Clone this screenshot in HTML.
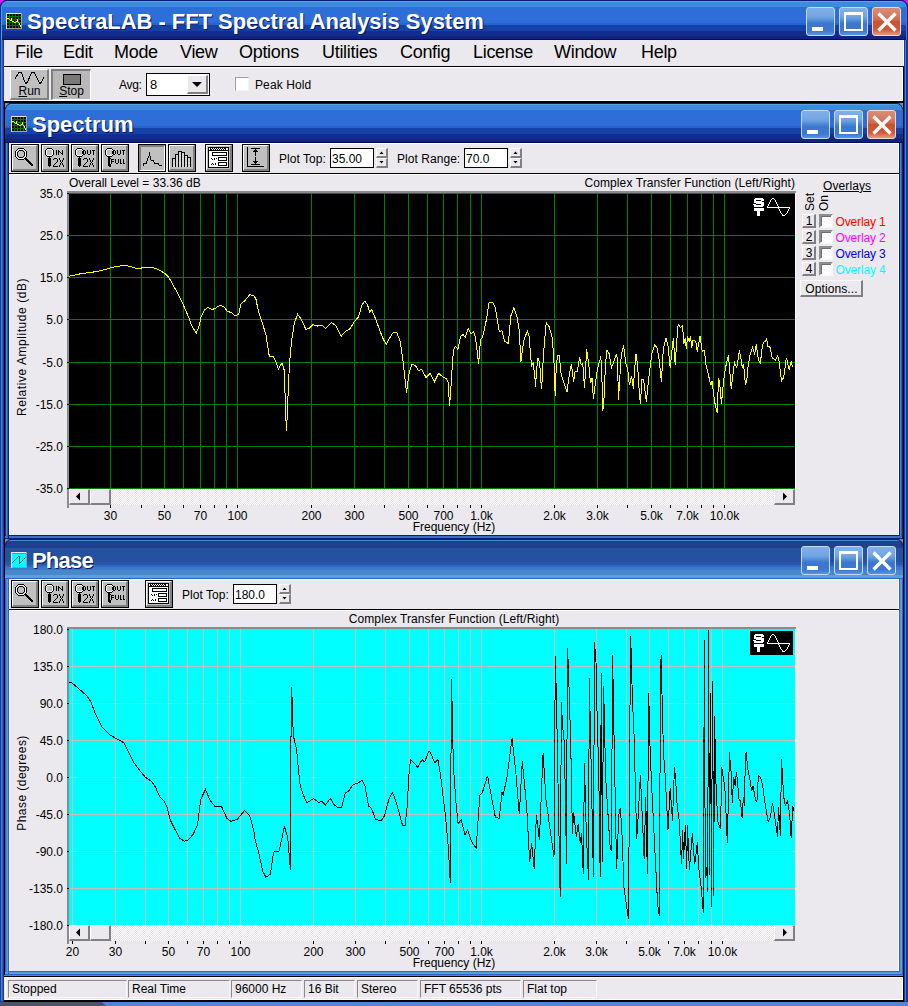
<!DOCTYPE html><html><head><meta charset="utf-8"><style>html,body{margin:0;padding:0;}body{width:908px;height:1006px;overflow:hidden;position:relative;background:#EBE9ED;font-family:"Liberation Sans", sans-serif;}</style></head><body>
<div style="position:absolute;left:0px;top:0px;width:908px;height:1006px;background:#1A3A9A"></div>
<div style="position:absolute;left:1px;top:40px;width:1px;height:961px;background:#4A7ED0"></div>
<div style="position:absolute;left:2px;top:40px;width:1px;height:961px;background:#2F5CC0"></div>
<div style="position:absolute;left:905px;top:40px;width:1px;height:961px;background:#4A7ED0"></div>
<div style="position:absolute;left:904px;top:40px;width:1px;height:961px;background:#1A3A9A"></div>
<div style="position:absolute;left:4px;top:40px;width:900px;height:961px;background:#000"></div>
<div style="position:absolute;left:0px;top:0px;width:908px;height:1px;background:#0A1A78"></div>
<div style="position:absolute;left:0px;top:1px;width:908px;height:1px;background:#5CA2EA"></div>
<div style="position:absolute;left:0px;top:2px;width:908px;height:5px;background:#3D8BDC"></div>
<div style="position:absolute;left:0px;top:7px;width:908px;height:16px;background:#2E6ED8"></div>
<div style="position:absolute;left:0px;top:23px;width:908px;height:2px;background:#2962CC"></div>
<div style="position:absolute;left:0px;top:25px;width:908px;height:6px;background:#1542A8"></div>
<div style="position:absolute;left:0px;top:31px;width:908px;height:5px;background:#132D8E"></div>
<div style="position:absolute;left:0px;top:36px;width:908px;height:3px;background:#0F2480"></div>
<div style="position:absolute;left:0px;top:39px;width:908px;height:1px;background:#020C58"></div>
<div style="position:absolute;left:0px;top:5px;width:1px;height:35px;background:#0A2A8A"></div>
<div style="position:absolute;left:1px;top:6px;width:1px;height:34px;background:#5A9AE0"></div>
<div style="position:absolute;left:907px;top:5px;width:1px;height:35px;background:#0A2A8A"></div>
<div style="position:absolute;left:906px;top:6px;width:1px;height:34px;background:#3A78D8"></div>
<svg style="position:absolute;left:0;top:0" width="9" height="9"><path d="M0 0 H6.5 A6.5 6.5 0 0 0 0 6.5 Z" fill="#FF00FF"/><path d="M0.5 7 A6.5 6.5 0 0 1 7 0.5" fill="none" stroke="#0A1A78" stroke-width="1.2"/></svg>
<svg style="position:absolute;left:899px;top:0" width="9" height="9"><path d="M9 0 H2.5 A6.5 6.5 0 0 1 9 6.5 Z" fill="#FF00FF"/><path d="M2 0.5 A6.5 6.5 0 0 1 8.5 7" fill="none" stroke="#0A1A78" stroke-width="1.2"/></svg>
<div style="position:absolute;left:27px;top:11.38px;height:22px;line-height:22px;font-size:22px;font-weight:700;color:#fff;letter-spacing:-0.05px;white-space:nowrap;text-shadow:1px 1px 0 #0A1860;">SpectraLAB - FFT Spectral Analysis System</div>
<div style="position:absolute;left:806px;top:7px;width:27px;height:27px;border:1px solid #C4DAF6;border-radius:3px;background:linear-gradient(#80B0E8 0%,#74A6E4 30%,#5E96DC 42%,#4A86D2 50%,#3E76CE 58%,#3E78D0 85%,#5C94E0 100%);"></div>
<div style="position:absolute;left:812px;top:27px;width:11px;height:4px;background:#fff"></div>
<div style="position:absolute;left:839px;top:7px;width:27px;height:27px;border:1px solid #C4DAF6;border-radius:3px;background:linear-gradient(#80B0E8 0%,#74A6E4 30%,#5E96DC 42%,#4A86D2 50%,#3E76CE 58%,#3E78D0 85%,#5C94E0 100%);"></div>
<div style="position:absolute;left:844px;top:12px;width:15px;height:14px;border-style:solid;border-color:#fff;border-width:3px 2px 2px 2px;"></div>
<div style="position:absolute;left:872px;top:7px;width:27px;height:27px;border:1px solid #F4D8CC;border-radius:3px;background:linear-gradient(#DC8C74 0%,#D47A62 30%,#CF6A4E 45%,#C9532F 50%,#CE5A38 80%,#E59A80 100%);"></div>
<svg style="position:absolute;left:872px;top:7px" width="30" height="30"><path d="M6.5 6.5 L23.5 23.5 M23.5 6.5 L6.5 23.5" stroke="#fff" stroke-width="3.3" stroke-linecap="butt"/></svg>
<div style="position:absolute;left:4px;top:40px;width:900px;height:26px;background:#EBE9ED"></div>
<div style="position:absolute;left:903px;top:40px;width:1px;height:26px;background:#fff"></div>
<div style="position:absolute;left:4px;top:66px;width:900px;height:1px;background:#000"></div>
<div style="position:absolute;left:15px;top:42.76px;height:18px;line-height:18px;font-size:18px;font-weight:400;color:#000;letter-spacing:-0.3px;white-space:nowrap;">File</div>
<div style="position:absolute;left:63px;top:42.76px;height:18px;line-height:18px;font-size:18px;font-weight:400;color:#000;letter-spacing:-0.3px;white-space:nowrap;">Edit</div>
<div style="position:absolute;left:114px;top:42.76px;height:18px;line-height:18px;font-size:18px;font-weight:400;color:#000;letter-spacing:-0.3px;white-space:nowrap;">Mode</div>
<div style="position:absolute;left:180px;top:42.76px;height:18px;line-height:18px;font-size:18px;font-weight:400;color:#000;letter-spacing:-0.3px;white-space:nowrap;">View</div>
<div style="position:absolute;left:239px;top:42.76px;height:18px;line-height:18px;font-size:18px;font-weight:400;color:#000;letter-spacing:-0.3px;white-space:nowrap;">Options</div>
<div style="position:absolute;left:322px;top:42.76px;height:18px;line-height:18px;font-size:18px;font-weight:400;color:#000;letter-spacing:-0.3px;white-space:nowrap;">Utilities</div>
<div style="position:absolute;left:400px;top:42.76px;height:18px;line-height:18px;font-size:18px;font-weight:400;color:#000;letter-spacing:-0.3px;white-space:nowrap;">Config</div>
<div style="position:absolute;left:473px;top:42.76px;height:18px;line-height:18px;font-size:18px;font-weight:400;color:#000;letter-spacing:-0.3px;white-space:nowrap;">License</div>
<div style="position:absolute;left:554px;top:42.76px;height:18px;line-height:18px;font-size:18px;font-weight:400;color:#000;letter-spacing:-0.3px;white-space:nowrap;">Window</div>
<div style="position:absolute;left:641px;top:42.76px;height:18px;line-height:18px;font-size:18px;font-weight:400;color:#000;letter-spacing:-0.3px;white-space:nowrap;">Help</div>
<div style="position:absolute;left:4px;top:67px;width:900px;height:34px;background:#EBE9ED"></div>
<div style="position:absolute;left:5px;top:67px;width:898px;height:1px;background:#fff"></div>
<div style="position:absolute;left:5px;top:100px;width:898px;height:1px;background:#fff"></div>
<div style="position:absolute;left:902px;top:67px;width:1px;height:34px;background:#fff"></div>
<div style="position:absolute;left:903px;top:66px;width:1px;height:37px;background:#000"></div>
<div style="position:absolute;left:4px;top:101px;width:900px;height:2px;background:#000"></div>
<div style="position:absolute;left:10px;top:69px;width:36px;height:28px;background:#C0C0C0;border-style:solid;border-width:1px 2px 2px 1px;border-color:#fff #808080 #808080 #fff"></div>
<svg style="position:absolute;left:10px;top:69px" width="39" height="31"><polyline points="5.2,9.5 8.5,4.0 10.0,3.0 11.5,4.0 14.5,12.0 16.0,14.5 17.5,13.0 21.5,4.0 23.0,3.0 24.5,4.0 28.5,12.0 30.0,14.5 31.5,13.0 33.6,8.5" fill="none" stroke="#000" stroke-width="1" shape-rendering="crispEdges"/></svg>
<div style="position:absolute;left:-170.5px;width:400px;top:84.84px;height:12px;line-height:12px;font-size:12px;font-weight:400;color:#000;letter-spacing:0px;white-space:nowrap;text-align:center;"><u>R</u>un</div>
<div style="position:absolute;left:51px;top:69px;width:37px;height:28px;background:#B8B8B8;border-style:solid;border-width:2px 1px 1px 2px;border-color:#808080 #fff #fff #808080"></div>
<div style="position:absolute;left:63px;top:74px;width:16px;height:9px;background:#7A7A7A;border:1px solid #000"></div>
<div style="position:absolute;left:-128.5px;width:400px;top:85.34px;height:12px;line-height:12px;font-size:12px;font-weight:400;color:#000;letter-spacing:0px;white-space:nowrap;text-align:center;"><u>S</u>top</div>
<div style="position:absolute;left:119px;top:78.84px;height:12px;line-height:12px;font-size:12px;font-weight:400;color:#000;letter-spacing:-0.3px;white-space:nowrap;">Avg:</div>
<div style="position:absolute;left:146px;top:73px;width:62px;height:21px;background:#fff;border:1px solid #000"></div>
<div style="position:absolute;left:187px;top:75px;width:18px;height:16px;background:#EBE9ED;border-style:solid;border-width:1px 2px 2px 1px;border-color:#fff #808080 #808080 #fff"></div>
<svg style="position:absolute;left:187px;top:75px" width="21" height="19"><path d="M5 7 H15 L10 12 Z" fill="#000"/></svg>
<div style="position:absolute;left:150px;top:78.00px;height:13px;line-height:13px;font-size:13px;font-weight:400;color:#000;letter-spacing:0px;white-space:nowrap;">8</div>
<div style="position:absolute;left:235px;top:77px;width:12px;height:12px;background:#fff;border-style:solid;border-width:1px;border-color:#A0A0A0 #F4F4F4 #F4F4F4 #A0A0A0"></div>
<div style="position:absolute;left:255px;top:78.84px;height:12px;line-height:12px;font-size:12px;font-weight:400;color:#000;letter-spacing:0.1px;white-space:nowrap;">Peak Hold</div>
<svg style="position:absolute;left:6px;top:13px" width="16" height="16" shape-rendering="crispEdges"><rect x="0" y="0" width="15" height="1" fill="#E4E2E0"/><rect x="15" y="0" width="1" height="1" fill="#A0A0A0"/><rect x="0" y="1" width="1" height="1" fill="#E4E2E0"/><rect x="1" y="1" width="2" height="1" fill="#000"/><rect x="3" y="1" width="1" height="1" fill="#007400"/><rect x="4" y="1" width="2" height="1" fill="#000"/><rect x="6" y="1" width="1" height="1" fill="#007400"/><rect x="7" y="1" width="2" height="1" fill="#000"/><rect x="9" y="1" width="1" height="1" fill="#007400"/><rect x="10" y="1" width="2" height="1" fill="#000"/><rect x="12" y="1" width="1" height="1" fill="#007400"/><rect x="13" y="1" width="2" height="1" fill="#000"/><rect x="15" y="1" width="1" height="1" fill="#A0A0A0"/><rect x="0" y="2" width="1" height="1" fill="#E4E2E0"/><rect x="1" y="2" width="2" height="1" fill="#000"/><rect x="3" y="2" width="1" height="1" fill="#007400"/><rect x="4" y="2" width="2" height="1" fill="#000"/><rect x="6" y="2" width="1" height="1" fill="#007400"/><rect x="7" y="2" width="2" height="1" fill="#000"/><rect x="9" y="2" width="1" height="1" fill="#007400"/><rect x="10" y="2" width="2" height="1" fill="#000"/><rect x="12" y="2" width="1" height="1" fill="#007400"/><rect x="13" y="2" width="2" height="1" fill="#000"/><rect x="15" y="2" width="1" height="1" fill="#A0A0A0"/><rect x="0" y="3" width="1" height="1" fill="#E4E2E0"/><rect x="1" y="3" width="14" height="1" fill="#007400"/><rect x="15" y="3" width="1" height="1" fill="#A0A0A0"/><rect x="0" y="4" width="1" height="1" fill="#E4E2E0"/><rect x="1" y="4" width="2" height="1" fill="#000"/><rect x="3" y="4" width="1" height="1" fill="#007400"/><rect x="4" y="4" width="2" height="1" fill="#000"/><rect x="6" y="4" width="1" height="1" fill="#007400"/><rect x="7" y="4" width="2" height="1" fill="#000"/><rect x="9" y="4" width="1" height="1" fill="#007400"/><rect x="10" y="4" width="2" height="1" fill="#000"/><rect x="12" y="4" width="1" height="1" fill="#007400"/><rect x="13" y="4" width="2" height="1" fill="#000"/><rect x="15" y="4" width="1" height="1" fill="#A0A0A0"/><rect x="0" y="5" width="1" height="1" fill="#E4E2E0"/><rect x="1" y="5" width="2" height="1" fill="#FFFF00"/><rect x="3" y="5" width="1" height="1" fill="#007400"/><rect x="4" y="5" width="1" height="1" fill="#000"/><rect x="5" y="5" width="1" height="1" fill="#FFFF00"/><rect x="6" y="5" width="1" height="1" fill="#007400"/><rect x="7" y="5" width="2" height="1" fill="#000"/><rect x="9" y="5" width="1" height="1" fill="#007400"/><rect x="10" y="5" width="2" height="1" fill="#000"/><rect x="12" y="5" width="1" height="1" fill="#007400"/><rect x="13" y="5" width="2" height="1" fill="#000"/><rect x="15" y="5" width="1" height="1" fill="#A0A0A0"/><rect x="0" y="6" width="1" height="1" fill="#E4E2E0"/><rect x="1" y="6" width="2" height="1" fill="#007400"/><rect x="3" y="6" width="1" height="1" fill="#FFFF00"/><rect x="4" y="6" width="1" height="1" fill="#007400"/><rect x="5" y="6" width="1" height="1" fill="#FFFF00"/><rect x="6" y="6" width="5" height="1" fill="#007400"/><rect x="11" y="6" width="1" height="1" fill="#FFFF00"/><rect x="12" y="6" width="3" height="1" fill="#007400"/><rect x="15" y="6" width="1" height="1" fill="#A0A0A0"/><rect x="0" y="7" width="1" height="1" fill="#E4E2E0"/><rect x="1" y="7" width="2" height="1" fill="#000"/><rect x="3" y="7" width="1" height="1" fill="#007400"/><rect x="4" y="7" width="2" height="1" fill="#FFFF00"/><rect x="6" y="7" width="1" height="1" fill="#007400"/><rect x="7" y="7" width="2" height="1" fill="#000"/><rect x="9" y="7" width="1" height="1" fill="#007400"/><rect x="10" y="7" width="1" height="1" fill="#000"/><rect x="11" y="7" width="1" height="1" fill="#FFFF00"/><rect x="12" y="7" width="1" height="1" fill="#007400"/><rect x="13" y="7" width="2" height="1" fill="#000"/><rect x="15" y="7" width="1" height="1" fill="#A0A0A0"/><rect x="0" y="8" width="1" height="1" fill="#E4E2E0"/><rect x="1" y="8" width="2" height="1" fill="#000"/><rect x="3" y="8" width="1" height="1" fill="#007400"/><rect x="4" y="8" width="2" height="1" fill="#000"/><rect x="6" y="8" width="2" height="1" fill="#FFFF00"/><rect x="8" y="8" width="1" height="1" fill="#000"/><rect x="9" y="8" width="1" height="1" fill="#007400"/><rect x="10" y="8" width="2" height="1" fill="#FFFF00"/><rect x="12" y="8" width="1" height="1" fill="#007400"/><rect x="13" y="8" width="2" height="1" fill="#000"/><rect x="15" y="8" width="1" height="1" fill="#A0A0A0"/><rect x="0" y="9" width="1" height="1" fill="#E4E2E0"/><rect x="1" y="9" width="7" height="1" fill="#007400"/><rect x="8" y="9" width="2" height="1" fill="#FFFF00"/><rect x="10" y="9" width="2" height="1" fill="#007400"/><rect x="12" y="9" width="1" height="1" fill="#FFFF00"/><rect x="13" y="9" width="2" height="1" fill="#007400"/><rect x="15" y="9" width="1" height="1" fill="#A0A0A0"/><rect x="0" y="10" width="1" height="1" fill="#E4E2E0"/><rect x="1" y="10" width="2" height="1" fill="#000"/><rect x="3" y="10" width="1" height="1" fill="#007400"/><rect x="4" y="10" width="2" height="1" fill="#000"/><rect x="6" y="10" width="1" height="1" fill="#007400"/><rect x="7" y="10" width="2" height="1" fill="#000"/><rect x="9" y="10" width="1" height="1" fill="#007400"/><rect x="10" y="10" width="2" height="1" fill="#000"/><rect x="12" y="10" width="1" height="1" fill="#007400"/><rect x="13" y="10" width="1" height="1" fill="#FFFF00"/><rect x="14" y="10" width="1" height="1" fill="#000"/><rect x="15" y="10" width="1" height="1" fill="#A0A0A0"/><rect x="0" y="11" width="1" height="1" fill="#E4E2E0"/><rect x="1" y="11" width="2" height="1" fill="#000"/><rect x="3" y="11" width="1" height="1" fill="#007400"/><rect x="4" y="11" width="2" height="1" fill="#000"/><rect x="6" y="11" width="1" height="1" fill="#007400"/><rect x="7" y="11" width="2" height="1" fill="#000"/><rect x="9" y="11" width="1" height="1" fill="#007400"/><rect x="10" y="11" width="2" height="1" fill="#000"/><rect x="12" y="11" width="1" height="1" fill="#007400"/><rect x="13" y="11" width="1" height="1" fill="#FFFF00"/><rect x="14" y="11" width="1" height="1" fill="#000"/><rect x="15" y="11" width="1" height="1" fill="#A0A0A0"/><rect x="0" y="12" width="1" height="1" fill="#E4E2E0"/><rect x="1" y="12" width="13" height="1" fill="#007400"/><rect x="14" y="12" width="1" height="1" fill="#FFFF00"/><rect x="15" y="12" width="1" height="1" fill="#A0A0A0"/><rect x="0" y="13" width="1" height="1" fill="#E4E2E0"/><rect x="1" y="13" width="2" height="1" fill="#000"/><rect x="3" y="13" width="1" height="1" fill="#007400"/><rect x="4" y="13" width="2" height="1" fill="#000"/><rect x="6" y="13" width="1" height="1" fill="#007400"/><rect x="7" y="13" width="2" height="1" fill="#000"/><rect x="9" y="13" width="1" height="1" fill="#007400"/><rect x="10" y="13" width="2" height="1" fill="#000"/><rect x="12" y="13" width="1" height="1" fill="#007400"/><rect x="13" y="13" width="1" height="1" fill="#000"/><rect x="14" y="13" width="1" height="1" fill="#FFFF00"/><rect x="15" y="13" width="1" height="1" fill="#A0A0A0"/><rect x="0" y="14" width="1" height="1" fill="#E4E2E0"/><rect x="1" y="14" width="2" height="1" fill="#000"/><rect x="3" y="14" width="1" height="1" fill="#007400"/><rect x="4" y="14" width="2" height="1" fill="#000"/><rect x="6" y="14" width="1" height="1" fill="#007400"/><rect x="7" y="14" width="2" height="1" fill="#000"/><rect x="9" y="14" width="1" height="1" fill="#007400"/><rect x="10" y="14" width="2" height="1" fill="#000"/><rect x="12" y="14" width="1" height="1" fill="#007400"/><rect x="13" y="14" width="2" height="1" fill="#000"/><rect x="15" y="14" width="1" height="1" fill="#A0A0A0"/><rect x="0" y="15" width="1" height="1" fill="#E4E2E0"/><rect x="1" y="15" width="15" height="1" fill="#A0A0A0"/></svg>
<div style="position:absolute;left:5px;top:103px;width:1px;height:436px;background:#1A3A9A"></div>
<div style="position:absolute;left:899px;top:103px;width:1px;height:436px;background:#0A2070"></div>
<div style="position:absolute;left:5px;top:535px;width:898px;height:1px;background:#0A2070"></div>
<div style="position:absolute;left:6px;top:103px;width:1px;height:436px;background:#4A7ED0"></div>
<div style="position:absolute;left:900px;top:103px;width:1px;height:436px;background:#4A7ED0"></div>
<div style="position:absolute;left:5px;top:536px;width:898px;height:1px;background:#3A6FC8"></div>
<div style="position:absolute;left:7px;top:103px;width:1px;height:436px;background:#2F5CC0"></div>
<div style="position:absolute;left:901px;top:103px;width:1px;height:436px;background:#2F5CC0"></div>
<div style="position:absolute;left:5px;top:537px;width:898px;height:1px;background:#3A6FC8"></div>
<div style="position:absolute;left:8px;top:103px;width:1px;height:436px;background:#0A2070"></div>
<div style="position:absolute;left:902px;top:103px;width:1px;height:436px;background:#0A2070"></div>
<div style="position:absolute;left:5px;top:538px;width:898px;height:1px;background:#0A2070"></div>
<div style="position:absolute;left:5px;top:103px;width:898px;height:1px;background:#0A1A78"></div>
<div style="position:absolute;left:5px;top:104px;width:898px;height:1px;background:#5CA2EA"></div>
<div style="position:absolute;left:5px;top:105px;width:898px;height:5px;background:#3D8BDC"></div>
<div style="position:absolute;left:5px;top:110px;width:898px;height:16px;background:#2E6ED8"></div>
<div style="position:absolute;left:5px;top:126px;width:898px;height:2px;background:#2962CC"></div>
<div style="position:absolute;left:5px;top:128px;width:898px;height:6px;background:#1542A8"></div>
<div style="position:absolute;left:5px;top:134px;width:898px;height:5px;background:#132D8E"></div>
<div style="position:absolute;left:5px;top:139px;width:898px;height:3px;background:#0F2480"></div>
<div style="position:absolute;left:5px;top:142px;width:898px;height:1px;background:#020C58"></div>
<svg style="position:absolute;left:5px;top:103px" width="8" height="8"><path d="M0 0 H6 A6 6 0 0 0 0 6 Z" fill="#8A8A8A"/><path d="M0.5 6.5 A6 6 0 0 1 6.5 0.5" fill="none" stroke="#0A1A78" stroke-width="1"/></svg>
<svg style="position:absolute;left:895px;top:103px" width="8" height="8"><path d="M8 0 H2 A6 6 0 0 1 8 6 Z" fill="#8A8A8A"/><path d="M1.5 0.5 A6 6 0 0 1 7.5 6.5" fill="none" stroke="#0A1A78" stroke-width="1"/></svg>
<div style="position:absolute;left:9px;top:143px;width:890px;height:392px;background:#EBE9ED"></div>
<div style="position:absolute;left:9px;top:143px;width:890px;height:1px;background:#fff"></div>
<div style="position:absolute;left:9px;top:143px;width:1px;height:392px;background:#fff"></div>
<div style="position:absolute;left:898px;top:143px;width:1px;height:392px;background:#fff"></div>
<svg style="position:absolute;left:11px;top:116px" width="16" height="16" shape-rendering="crispEdges"><rect x="0" y="0" width="15" height="1" fill="#E4E2E0"/><rect x="15" y="0" width="1" height="1" fill="#A0A0A0"/><rect x="0" y="1" width="1" height="1" fill="#E4E2E0"/><rect x="1" y="1" width="2" height="1" fill="#000"/><rect x="3" y="1" width="1" height="1" fill="#007400"/><rect x="4" y="1" width="2" height="1" fill="#000"/><rect x="6" y="1" width="1" height="1" fill="#007400"/><rect x="7" y="1" width="2" height="1" fill="#000"/><rect x="9" y="1" width="1" height="1" fill="#007400"/><rect x="10" y="1" width="2" height="1" fill="#000"/><rect x="12" y="1" width="1" height="1" fill="#007400"/><rect x="13" y="1" width="2" height="1" fill="#000"/><rect x="15" y="1" width="1" height="1" fill="#A0A0A0"/><rect x="0" y="2" width="1" height="1" fill="#E4E2E0"/><rect x="1" y="2" width="2" height="1" fill="#000"/><rect x="3" y="2" width="1" height="1" fill="#007400"/><rect x="4" y="2" width="2" height="1" fill="#000"/><rect x="6" y="2" width="1" height="1" fill="#007400"/><rect x="7" y="2" width="2" height="1" fill="#000"/><rect x="9" y="2" width="1" height="1" fill="#007400"/><rect x="10" y="2" width="2" height="1" fill="#000"/><rect x="12" y="2" width="1" height="1" fill="#007400"/><rect x="13" y="2" width="2" height="1" fill="#000"/><rect x="15" y="2" width="1" height="1" fill="#A0A0A0"/><rect x="0" y="3" width="1" height="1" fill="#E4E2E0"/><rect x="1" y="3" width="14" height="1" fill="#007400"/><rect x="15" y="3" width="1" height="1" fill="#A0A0A0"/><rect x="0" y="4" width="1" height="1" fill="#E4E2E0"/><rect x="1" y="4" width="2" height="1" fill="#000"/><rect x="3" y="4" width="1" height="1" fill="#007400"/><rect x="4" y="4" width="2" height="1" fill="#000"/><rect x="6" y="4" width="1" height="1" fill="#007400"/><rect x="7" y="4" width="2" height="1" fill="#000"/><rect x="9" y="4" width="1" height="1" fill="#007400"/><rect x="10" y="4" width="2" height="1" fill="#000"/><rect x="12" y="4" width="1" height="1" fill="#007400"/><rect x="13" y="4" width="2" height="1" fill="#000"/><rect x="15" y="4" width="1" height="1" fill="#A0A0A0"/><rect x="0" y="5" width="1" height="1" fill="#E4E2E0"/><rect x="1" y="5" width="2" height="1" fill="#FFFF00"/><rect x="3" y="5" width="1" height="1" fill="#007400"/><rect x="4" y="5" width="1" height="1" fill="#000"/><rect x="5" y="5" width="1" height="1" fill="#FFFF00"/><rect x="6" y="5" width="1" height="1" fill="#007400"/><rect x="7" y="5" width="2" height="1" fill="#000"/><rect x="9" y="5" width="1" height="1" fill="#007400"/><rect x="10" y="5" width="2" height="1" fill="#000"/><rect x="12" y="5" width="1" height="1" fill="#007400"/><rect x="13" y="5" width="2" height="1" fill="#000"/><rect x="15" y="5" width="1" height="1" fill="#A0A0A0"/><rect x="0" y="6" width="1" height="1" fill="#E4E2E0"/><rect x="1" y="6" width="2" height="1" fill="#007400"/><rect x="3" y="6" width="1" height="1" fill="#FFFF00"/><rect x="4" y="6" width="1" height="1" fill="#007400"/><rect x="5" y="6" width="1" height="1" fill="#FFFF00"/><rect x="6" y="6" width="5" height="1" fill="#007400"/><rect x="11" y="6" width="1" height="1" fill="#FFFF00"/><rect x="12" y="6" width="3" height="1" fill="#007400"/><rect x="15" y="6" width="1" height="1" fill="#A0A0A0"/><rect x="0" y="7" width="1" height="1" fill="#E4E2E0"/><rect x="1" y="7" width="2" height="1" fill="#000"/><rect x="3" y="7" width="1" height="1" fill="#007400"/><rect x="4" y="7" width="2" height="1" fill="#FFFF00"/><rect x="6" y="7" width="1" height="1" fill="#007400"/><rect x="7" y="7" width="2" height="1" fill="#000"/><rect x="9" y="7" width="1" height="1" fill="#007400"/><rect x="10" y="7" width="1" height="1" fill="#000"/><rect x="11" y="7" width="1" height="1" fill="#FFFF00"/><rect x="12" y="7" width="1" height="1" fill="#007400"/><rect x="13" y="7" width="2" height="1" fill="#000"/><rect x="15" y="7" width="1" height="1" fill="#A0A0A0"/><rect x="0" y="8" width="1" height="1" fill="#E4E2E0"/><rect x="1" y="8" width="2" height="1" fill="#000"/><rect x="3" y="8" width="1" height="1" fill="#007400"/><rect x="4" y="8" width="2" height="1" fill="#000"/><rect x="6" y="8" width="2" height="1" fill="#FFFF00"/><rect x="8" y="8" width="1" height="1" fill="#000"/><rect x="9" y="8" width="1" height="1" fill="#007400"/><rect x="10" y="8" width="2" height="1" fill="#FFFF00"/><rect x="12" y="8" width="1" height="1" fill="#007400"/><rect x="13" y="8" width="2" height="1" fill="#000"/><rect x="15" y="8" width="1" height="1" fill="#A0A0A0"/><rect x="0" y="9" width="1" height="1" fill="#E4E2E0"/><rect x="1" y="9" width="7" height="1" fill="#007400"/><rect x="8" y="9" width="2" height="1" fill="#FFFF00"/><rect x="10" y="9" width="2" height="1" fill="#007400"/><rect x="12" y="9" width="1" height="1" fill="#FFFF00"/><rect x="13" y="9" width="2" height="1" fill="#007400"/><rect x="15" y="9" width="1" height="1" fill="#A0A0A0"/><rect x="0" y="10" width="1" height="1" fill="#E4E2E0"/><rect x="1" y="10" width="2" height="1" fill="#000"/><rect x="3" y="10" width="1" height="1" fill="#007400"/><rect x="4" y="10" width="2" height="1" fill="#000"/><rect x="6" y="10" width="1" height="1" fill="#007400"/><rect x="7" y="10" width="2" height="1" fill="#000"/><rect x="9" y="10" width="1" height="1" fill="#007400"/><rect x="10" y="10" width="2" height="1" fill="#000"/><rect x="12" y="10" width="1" height="1" fill="#007400"/><rect x="13" y="10" width="1" height="1" fill="#FFFF00"/><rect x="14" y="10" width="1" height="1" fill="#000"/><rect x="15" y="10" width="1" height="1" fill="#A0A0A0"/><rect x="0" y="11" width="1" height="1" fill="#E4E2E0"/><rect x="1" y="11" width="2" height="1" fill="#000"/><rect x="3" y="11" width="1" height="1" fill="#007400"/><rect x="4" y="11" width="2" height="1" fill="#000"/><rect x="6" y="11" width="1" height="1" fill="#007400"/><rect x="7" y="11" width="2" height="1" fill="#000"/><rect x="9" y="11" width="1" height="1" fill="#007400"/><rect x="10" y="11" width="2" height="1" fill="#000"/><rect x="12" y="11" width="1" height="1" fill="#007400"/><rect x="13" y="11" width="1" height="1" fill="#FFFF00"/><rect x="14" y="11" width="1" height="1" fill="#000"/><rect x="15" y="11" width="1" height="1" fill="#A0A0A0"/><rect x="0" y="12" width="1" height="1" fill="#E4E2E0"/><rect x="1" y="12" width="13" height="1" fill="#007400"/><rect x="14" y="12" width="1" height="1" fill="#FFFF00"/><rect x="15" y="12" width="1" height="1" fill="#A0A0A0"/><rect x="0" y="13" width="1" height="1" fill="#E4E2E0"/><rect x="1" y="13" width="2" height="1" fill="#000"/><rect x="3" y="13" width="1" height="1" fill="#007400"/><rect x="4" y="13" width="2" height="1" fill="#000"/><rect x="6" y="13" width="1" height="1" fill="#007400"/><rect x="7" y="13" width="2" height="1" fill="#000"/><rect x="9" y="13" width="1" height="1" fill="#007400"/><rect x="10" y="13" width="2" height="1" fill="#000"/><rect x="12" y="13" width="1" height="1" fill="#007400"/><rect x="13" y="13" width="1" height="1" fill="#000"/><rect x="14" y="13" width="1" height="1" fill="#FFFF00"/><rect x="15" y="13" width="1" height="1" fill="#A0A0A0"/><rect x="0" y="14" width="1" height="1" fill="#E4E2E0"/><rect x="1" y="14" width="2" height="1" fill="#000"/><rect x="3" y="14" width="1" height="1" fill="#007400"/><rect x="4" y="14" width="2" height="1" fill="#000"/><rect x="6" y="14" width="1" height="1" fill="#007400"/><rect x="7" y="14" width="2" height="1" fill="#000"/><rect x="9" y="14" width="1" height="1" fill="#007400"/><rect x="10" y="14" width="2" height="1" fill="#000"/><rect x="12" y="14" width="1" height="1" fill="#007400"/><rect x="13" y="14" width="2" height="1" fill="#000"/><rect x="15" y="14" width="1" height="1" fill="#A0A0A0"/><rect x="0" y="15" width="1" height="1" fill="#E4E2E0"/><rect x="1" y="15" width="15" height="1" fill="#A0A0A0"/></svg>
<div style="position:absolute;left:32px;top:113.88px;height:22px;line-height:22px;font-size:22px;font-weight:700;color:#fff;letter-spacing:0px;white-space:nowrap;text-shadow:1px 1px 0 #0A1860;">Spectrum</div>
<div style="position:absolute;left:801px;top:110px;width:27px;height:27px;border:1px solid #C4DAF6;border-radius:3px;background:linear-gradient(#80B0E8 0%,#74A6E4 30%,#5E96DC 42%,#4A86D2 50%,#3E76CE 58%,#3E78D0 85%,#5C94E0 100%);"></div>
<div style="position:absolute;left:807px;top:130px;width:11px;height:4px;background:#fff"></div>
<div style="position:absolute;left:834px;top:110px;width:27px;height:27px;border:1px solid #C4DAF6;border-radius:3px;background:linear-gradient(#80B0E8 0%,#74A6E4 30%,#5E96DC 42%,#4A86D2 50%,#3E76CE 58%,#3E78D0 85%,#5C94E0 100%);"></div>
<div style="position:absolute;left:839px;top:115px;width:15px;height:14px;border-style:solid;border-color:#fff;border-width:3px 2px 2px 2px;"></div>
<div style="position:absolute;left:867px;top:110px;width:27px;height:27px;border:1px solid #F4D8CC;border-radius:3px;background:linear-gradient(#DC8C74 0%,#D47A62 30%,#CF6A4E 45%,#C9532F 50%,#CE5A38 80%,#E59A80 100%);"></div>
<svg style="position:absolute;left:867px;top:110px" width="30" height="30"><path d="M6.5 6.5 L23.5 23.5 M23.5 6.5 L6.5 23.5" stroke="#fff" stroke-width="3.3" stroke-linecap="butt"/></svg>
<div style="position:absolute;left:5px;top:539px;width:1px;height:436px;background:#2C64D4"></div>
<div style="position:absolute;left:899px;top:539px;width:1px;height:436px;background:#2C64D4"></div>
<div style="position:absolute;left:5px;top:971px;width:898px;height:1px;background:#2C64D4"></div>
<div style="position:absolute;left:6px;top:539px;width:1px;height:436px;background:#4A8AD8"></div>
<div style="position:absolute;left:900px;top:539px;width:1px;height:436px;background:#5A9ADC"></div>
<div style="position:absolute;left:5px;top:972px;width:898px;height:1px;background:#5A9ADC"></div>
<div style="position:absolute;left:7px;top:539px;width:1px;height:436px;background:#5A9ADC"></div>
<div style="position:absolute;left:901px;top:539px;width:1px;height:436px;background:#5A9ADC"></div>
<div style="position:absolute;left:5px;top:973px;width:898px;height:1px;background:#5A9ADC"></div>
<div style="position:absolute;left:8px;top:539px;width:1px;height:436px;background:#2C64D4"></div>
<div style="position:absolute;left:902px;top:539px;width:1px;height:436px;background:#2C64D4"></div>
<div style="position:absolute;left:5px;top:974px;width:898px;height:1px;background:#2C64D4"></div>
<div style="position:absolute;left:5px;top:539px;width:898px;height:1px;background:#0A1A78"></div>
<div style="position:absolute;left:5px;top:540px;width:898px;height:1px;background:#4A8AD8"></div>
<div style="position:absolute;left:5px;top:541px;width:898px;height:7px;background:#1F3F8F"></div>
<div style="position:absolute;left:5px;top:548px;width:898px;height:14px;background:#2650A0"></div>
<div style="position:absolute;left:5px;top:562px;width:898px;height:3px;background:#2858B0"></div>
<div style="position:absolute;left:5px;top:565px;width:898px;height:2px;background:#3468C0"></div>
<div style="position:absolute;left:5px;top:567px;width:898px;height:3px;background:#3C78CC"></div>
<div style="position:absolute;left:5px;top:570px;width:898px;height:5px;background:#4888C8"></div>
<div style="position:absolute;left:5px;top:575px;width:898px;height:3px;background:#5AA0E0"></div>
<div style="position:absolute;left:5px;top:578px;width:898px;height:1px;background:#2A60C8"></div>
<svg style="position:absolute;left:5px;top:539px" width="8" height="8"><path d="M0 0 H6 A6 6 0 0 0 0 6 Z" fill="#8A8A8A"/><path d="M0.5 6.5 A6 6 0 0 1 6.5 0.5" fill="none" stroke="#0A1A78" stroke-width="1"/></svg>
<svg style="position:absolute;left:895px;top:539px" width="8" height="8"><path d="M8 0 H2 A6 6 0 0 1 8 6 Z" fill="#8A8A8A"/><path d="M1.5 0.5 A6 6 0 0 1 7.5 6.5" fill="none" stroke="#0A1A78" stroke-width="1"/></svg>
<div style="position:absolute;left:9px;top:579px;width:890px;height:392px;background:#EBE9ED"></div>
<div style="position:absolute;left:9px;top:579px;width:890px;height:1px;background:#fff"></div>
<div style="position:absolute;left:9px;top:579px;width:1px;height:392px;background:#fff"></div>
<div style="position:absolute;left:898px;top:579px;width:1px;height:392px;background:#fff"></div>
<svg style="position:absolute;left:11px;top:552px" width="16" height="16" shape-rendering="crispEdges"><rect x="0" y="0" width="15" height="1" fill="#F0E8E8"/><rect x="15" y="0" width="1" height="1" fill="#A09898"/><rect x="0" y="1" width="1" height="1" fill="#F0E8E8"/><rect x="1" y="1" width="14" height="1" fill="#00C0C0"/><rect x="15" y="1" width="1" height="1" fill="#A09898"/><rect x="0" y="2" width="1" height="1" fill="#F0E8E8"/><rect x="1" y="2" width="14" height="1" fill="#00FFFF"/><rect x="15" y="2" width="1" height="1" fill="#A09898"/><rect x="0" y="3" width="1" height="1" fill="#F0E8E8"/><rect x="1" y="3" width="14" height="1" fill="#00FFFF"/><rect x="15" y="3" width="1" height="1" fill="#A09898"/><rect x="0" y="4" width="1" height="1" fill="#F0E8E8"/><rect x="1" y="4" width="6" height="1" fill="#00FFFF"/><rect x="7" y="4" width="1" height="1" fill="#008888"/><rect x="8" y="4" width="1" height="1" fill="#003C3C"/><rect x="9" y="4" width="6" height="1" fill="#00FFFF"/><rect x="15" y="4" width="1" height="1" fill="#A09898"/><rect x="0" y="5" width="1" height="1" fill="#F0E8E8"/><rect x="1" y="5" width="5" height="1" fill="#00FFFF"/><rect x="6" y="5" width="1" height="1" fill="#008888"/><rect x="7" y="5" width="1" height="1" fill="#00FFFF"/><rect x="8" y="5" width="1" height="1" fill="#003C3C"/><rect x="9" y="5" width="5" height="1" fill="#00FFFF"/><rect x="14" y="5" width="1" height="1" fill="#40A0A0"/><rect x="15" y="5" width="1" height="1" fill="#A09898"/><rect x="0" y="6" width="1" height="1" fill="#F0E8E8"/><rect x="1" y="6" width="4" height="1" fill="#00FFFF"/><rect x="5" y="6" width="1" height="1" fill="#008888"/><rect x="6" y="6" width="2" height="1" fill="#00FFFF"/><rect x="8" y="6" width="1" height="1" fill="#003C3C"/><rect x="9" y="6" width="4" height="1" fill="#00FFFF"/><rect x="13" y="6" width="1" height="1" fill="#003C3C"/><rect x="14" y="6" width="1" height="1" fill="#00FFFF"/><rect x="15" y="6" width="1" height="1" fill="#A09898"/><rect x="0" y="7" width="1" height="1" fill="#F0E8E8"/><rect x="1" y="7" width="3" height="1" fill="#00FFFF"/><rect x="4" y="7" width="1" height="1" fill="#008888"/><rect x="5" y="7" width="3" height="1" fill="#00FFFF"/><rect x="8" y="7" width="1" height="1" fill="#003C3C"/><rect x="9" y="7" width="3" height="1" fill="#00FFFF"/><rect x="12" y="7" width="1" height="1" fill="#40A0A0"/><rect x="13" y="7" width="2" height="1" fill="#00FFFF"/><rect x="15" y="7" width="1" height="1" fill="#A09898"/><rect x="0" y="8" width="1" height="1" fill="#F0E8E8"/><rect x="1" y="8" width="2" height="1" fill="#00FFFF"/><rect x="3" y="8" width="1" height="1" fill="#008888"/><rect x="4" y="8" width="4" height="1" fill="#00FFFF"/><rect x="8" y="8" width="1" height="1" fill="#003C3C"/><rect x="9" y="8" width="2" height="1" fill="#00FFFF"/><rect x="11" y="8" width="1" height="1" fill="#003C3C"/><rect x="12" y="8" width="3" height="1" fill="#00FFFF"/><rect x="15" y="8" width="1" height="1" fill="#A09898"/><rect x="0" y="9" width="1" height="1" fill="#F0E8E8"/><rect x="1" y="9" width="1" height="1" fill="#00FFFF"/><rect x="2" y="9" width="1" height="1" fill="#008888"/><rect x="3" y="9" width="5" height="1" fill="#00FFFF"/><rect x="8" y="9" width="1" height="1" fill="#003C3C"/><rect x="9" y="9" width="1" height="1" fill="#00FFFF"/><rect x="10" y="9" width="1" height="1" fill="#40A0A0"/><rect x="11" y="9" width="4" height="1" fill="#00FFFF"/><rect x="15" y="9" width="1" height="1" fill="#A09898"/><rect x="0" y="10" width="1" height="1" fill="#F0E8E8"/><rect x="1" y="10" width="1" height="1" fill="#008888"/><rect x="2" y="10" width="6" height="1" fill="#00FFFF"/><rect x="8" y="10" width="2" height="1" fill="#003C3C"/><rect x="10" y="10" width="5" height="1" fill="#00FFFF"/><rect x="15" y="10" width="1" height="1" fill="#A09898"/><rect x="0" y="11" width="1" height="1" fill="#F0E8E8"/><rect x="1" y="11" width="7" height="1" fill="#00FFFF"/><rect x="8" y="11" width="1" height="1" fill="#003C3C"/><rect x="9" y="11" width="6" height="1" fill="#00FFFF"/><rect x="15" y="11" width="1" height="1" fill="#A09898"/><rect x="0" y="12" width="1" height="1" fill="#F0E8E8"/><rect x="1" y="12" width="14" height="1" fill="#00FFFF"/><rect x="15" y="12" width="1" height="1" fill="#A09898"/><rect x="0" y="13" width="1" height="1" fill="#F0E8E8"/><rect x="1" y="13" width="14" height="1" fill="#00FFFF"/><rect x="15" y="13" width="1" height="1" fill="#A09898"/><rect x="0" y="14" width="1" height="1" fill="#F0E8E8"/><rect x="1" y="14" width="14" height="1" fill="#00FFFF"/><rect x="15" y="14" width="1" height="1" fill="#A09898"/><rect x="0" y="15" width="1" height="1" fill="#F0E8E8"/><rect x="1" y="15" width="15" height="1" fill="#A09898"/></svg>
<div style="position:absolute;left:32px;top:549.88px;height:22px;line-height:22px;font-size:22px;font-weight:700;color:#fff;letter-spacing:-0.8px;white-space:nowrap;text-shadow:1px 1px 0 #0A1860;">Phase</div>
<div style="position:absolute;left:801px;top:546px;width:27px;height:27px;border:1px solid #C4DAF6;border-radius:3px;background:linear-gradient(#80B0E8 0%,#74A6E4 30%,#5E96DC 42%,#4A86D2 50%,#3E76CE 58%,#3E78D0 85%,#5C94E0 100%);"></div>
<div style="position:absolute;left:807px;top:566px;width:11px;height:4px;background:#fff"></div>
<div style="position:absolute;left:834px;top:546px;width:27px;height:27px;border:1px solid #C4DAF6;border-radius:3px;background:linear-gradient(#80B0E8 0%,#74A6E4 30%,#5E96DC 42%,#4A86D2 50%,#3E76CE 58%,#3E78D0 85%,#5C94E0 100%);"></div>
<div style="position:absolute;left:839px;top:551px;width:15px;height:14px;border-style:solid;border-color:#fff;border-width:3px 2px 2px 2px;"></div>
<div style="position:absolute;left:867px;top:546px;width:27px;height:27px;border:1px solid #C4DAF6;border-radius:3px;background:linear-gradient(#80B0E8 0%,#74A6E4 30%,#5E96DC 42%,#4A86D2 50%,#3E76CE 58%,#3E78D0 85%,#5C94E0 100%);"></div>
<svg style="position:absolute;left:867px;top:546px" width="30" height="30"><path d="M6.5 6.5 L23.5 23.5 M23.5 6.5 L6.5 23.5" stroke="#fff" stroke-width="3.3" stroke-linecap="butt"/></svg>
<div style="position:absolute;left:11px;top:144px;width:26px;height:26px;border:1px solid #000;"></div>
<div style="position:absolute;left:12px;top:145px;width:23px;height:23px;background:#C0C0C0;border-style:solid;border-width:1px 2px 2px 1px;border-color:#fff #808080 #808080 #fff"></div>
<div style="position:absolute;left:41px;top:144px;width:26px;height:26px;border:1px solid #000;"></div>
<div style="position:absolute;left:42px;top:145px;width:23px;height:23px;background:#C0C0C0;border-style:solid;border-width:1px 2px 2px 1px;border-color:#fff #808080 #808080 #fff"></div>
<div style="position:absolute;left:71px;top:144px;width:26px;height:26px;border:1px solid #000;"></div>
<div style="position:absolute;left:72px;top:145px;width:23px;height:23px;background:#C0C0C0;border-style:solid;border-width:1px 2px 2px 1px;border-color:#fff #808080 #808080 #fff"></div>
<div style="position:absolute;left:101px;top:144px;width:26px;height:26px;border:1px solid #000;"></div>
<div style="position:absolute;left:102px;top:145px;width:23px;height:23px;background:#C0C0C0;border-style:solid;border-width:1px 2px 2px 1px;border-color:#fff #808080 #808080 #fff"></div>
<svg style="position:absolute;left:11px;top:144px" width="28" height="28" shape-rendering="crispEdges"><rect x="7" y="4" width="6" height="1" fill="#000"/><rect x="6" y="5" width="1" height="1" fill="#000"/><rect x="7" y="5" width="6" height="1" fill="#fff"/><rect x="13" y="5" width="1" height="1" fill="#000"/><rect x="5" y="6" width="1" height="1" fill="#000"/><rect x="6" y="6" width="1" height="1" fill="#fff"/><rect x="8" y="6" width="4" height="1" fill="#000"/><rect x="13" y="6" width="1" height="1" fill="#fff"/><rect x="14" y="6" width="1" height="1" fill="#000"/><rect x="4" y="7" width="1" height="1" fill="#000"/><rect x="5" y="7" width="1" height="1" fill="#fff"/><rect x="7" y="7" width="1" height="1" fill="#000"/><rect x="12" y="7" width="1" height="1" fill="#000"/><rect x="14" y="7" width="1" height="1" fill="#fff"/><rect x="15" y="7" width="1" height="1" fill="#000"/><rect x="4" y="8" width="1" height="1" fill="#000"/><rect x="5" y="8" width="1" height="1" fill="#fff"/><rect x="6" y="8" width="1" height="1" fill="#000"/><rect x="13" y="8" width="1" height="1" fill="#000"/><rect x="14" y="8" width="1" height="1" fill="#fff"/><rect x="15" y="8" width="1" height="1" fill="#000"/><rect x="4" y="9" width="1" height="1" fill="#000"/><rect x="5" y="9" width="1" height="1" fill="#fff"/><rect x="6" y="9" width="1" height="1" fill="#000"/><rect x="13" y="9" width="1" height="1" fill="#000"/><rect x="14" y="9" width="1" height="1" fill="#fff"/><rect x="15" y="9" width="1" height="1" fill="#000"/><rect x="4" y="10" width="1" height="1" fill="#000"/><rect x="5" y="10" width="1" height="1" fill="#fff"/><rect x="6" y="10" width="1" height="1" fill="#000"/><rect x="13" y="10" width="1" height="1" fill="#000"/><rect x="14" y="10" width="1" height="1" fill="#fff"/><rect x="15" y="10" width="1" height="1" fill="#000"/><rect x="4" y="11" width="1" height="1" fill="#000"/><rect x="5" y="11" width="1" height="1" fill="#fff"/><rect x="6" y="11" width="1" height="1" fill="#000"/><rect x="13" y="11" width="1" height="1" fill="#000"/><rect x="14" y="11" width="1" height="1" fill="#fff"/><rect x="15" y="11" width="1" height="1" fill="#000"/><rect x="4" y="12" width="1" height="1" fill="#000"/><rect x="5" y="12" width="1" height="1" fill="#fff"/><rect x="7" y="12" width="1" height="1" fill="#000"/><rect x="12" y="12" width="1" height="1" fill="#000"/><rect x="14" y="12" width="1" height="1" fill="#fff"/><rect x="15" y="12" width="1" height="1" fill="#000"/><rect x="5" y="13" width="1" height="1" fill="#000"/><rect x="6" y="13" width="1" height="1" fill="#fff"/><rect x="8" y="13" width="4" height="1" fill="#000"/><rect x="13" y="13" width="1" height="1" fill="#fff"/><rect x="14" y="13" width="1" height="1" fill="#000"/><rect x="6" y="14" width="1" height="1" fill="#000"/><rect x="7" y="14" width="6" height="1" fill="#fff"/><rect x="13" y="14" width="3" height="1" fill="#000"/><rect x="7" y="15" width="6" height="1" fill="#000"/><rect x="14" y="15" width="3" height="1" fill="#000"/><rect x="15" y="16" width="3" height="1" fill="#000"/><rect x="16" y="17" width="3" height="1" fill="#000"/><rect x="17" y="18" width="3" height="1" fill="#000"/><rect x="18" y="19" width="3" height="1" fill="#000"/><rect x="19" y="20" width="3" height="1" fill="#000"/><rect x="20" y="21" width="2" height="1" fill="#000"/></svg>
<svg style="position:absolute;left:41px;top:144px" width="28" height="28" shape-rendering="crispEdges"><rect x="6" y="4" width="5" height="1" fill="#000"/><rect x="5" y="5" width="1" height="1" fill="#000"/><rect x="6" y="5" width="5" height="1" fill="#fff"/><rect x="11" y="5" width="1" height="1" fill="#000"/><rect x="4" y="6" width="1" height="1" fill="#000"/><rect x="5" y="6" width="1" height="1" fill="#fff"/><rect x="11" y="6" width="1" height="1" fill="#fff"/><rect x="12" y="6" width="1" height="1" fill="#000"/><rect x="15" y="6" width="1" height="1" fill="#000"/><rect x="17" y="6" width="1" height="1" fill="#000"/><rect x="21" y="6" width="1" height="1" fill="#000"/><rect x="4" y="7" width="1" height="1" fill="#000"/><rect x="5" y="7" width="1" height="1" fill="#fff"/><rect x="11" y="7" width="1" height="1" fill="#fff"/><rect x="12" y="7" width="1" height="1" fill="#000"/><rect x="15" y="7" width="1" height="1" fill="#000"/><rect x="17" y="7" width="2" height="1" fill="#000"/><rect x="21" y="7" width="1" height="1" fill="#000"/><rect x="4" y="8" width="1" height="1" fill="#000"/><rect x="5" y="8" width="1" height="1" fill="#fff"/><rect x="11" y="8" width="1" height="1" fill="#fff"/><rect x="12" y="8" width="1" height="1" fill="#000"/><rect x="15" y="8" width="1" height="1" fill="#000"/><rect x="17" y="8" width="1" height="1" fill="#000"/><rect x="19" y="8" width="1" height="1" fill="#000"/><rect x="21" y="8" width="1" height="1" fill="#000"/><rect x="4" y="9" width="1" height="1" fill="#000"/><rect x="5" y="9" width="1" height="1" fill="#fff"/><rect x="11" y="9" width="1" height="1" fill="#fff"/><rect x="12" y="9" width="1" height="1" fill="#000"/><rect x="15" y="9" width="1" height="1" fill="#000"/><rect x="17" y="9" width="1" height="1" fill="#000"/><rect x="20" y="9" width="2" height="1" fill="#000"/><rect x="4" y="10" width="1" height="1" fill="#000"/><rect x="5" y="10" width="1" height="1" fill="#fff"/><rect x="11" y="10" width="1" height="1" fill="#fff"/><rect x="12" y="10" width="1" height="1" fill="#000"/><rect x="15" y="10" width="1" height="1" fill="#000"/><rect x="17" y="10" width="1" height="1" fill="#000"/><rect x="21" y="10" width="1" height="1" fill="#000"/><rect x="5" y="11" width="1" height="1" fill="#000"/><rect x="6" y="11" width="5" height="1" fill="#fff"/><rect x="11" y="11" width="1" height="1" fill="#000"/><rect x="6" y="12" width="5" height="1" fill="#000"/><rect x="8" y="13" width="1" height="1" fill="#000"/><rect x="7" y="14" width="3" height="1" fill="#000"/><rect x="13" y="14" width="3" height="1" fill="#000"/><rect x="18" y="14" width="1" height="1" fill="#000"/><rect x="22" y="14" width="1" height="1" fill="#000"/><rect x="7" y="15" width="3" height="1" fill="#000"/><rect x="12" y="15" width="1" height="1" fill="#000"/><rect x="16" y="15" width="1" height="1" fill="#000"/><rect x="18" y="15" width="1" height="1" fill="#000"/><rect x="22" y="15" width="1" height="1" fill="#000"/><rect x="7" y="16" width="3" height="1" fill="#000"/><rect x="16" y="16" width="1" height="1" fill="#000"/><rect x="19" y="16" width="1" height="1" fill="#000"/><rect x="21" y="16" width="1" height="1" fill="#000"/><rect x="7" y="17" width="3" height="1" fill="#000"/><rect x="16" y="17" width="1" height="1" fill="#000"/><rect x="19" y="17" width="1" height="1" fill="#000"/><rect x="21" y="17" width="1" height="1" fill="#000"/><rect x="7" y="18" width="3" height="1" fill="#000"/><rect x="15" y="18" width="1" height="1" fill="#000"/><rect x="20" y="18" width="1" height="1" fill="#000"/><rect x="7" y="19" width="3" height="1" fill="#000"/><rect x="14" y="19" width="1" height="1" fill="#000"/><rect x="19" y="19" width="1" height="1" fill="#000"/><rect x="21" y="19" width="1" height="1" fill="#000"/><rect x="7" y="20" width="3" height="1" fill="#000"/><rect x="13" y="20" width="1" height="1" fill="#000"/><rect x="19" y="20" width="1" height="1" fill="#000"/><rect x="21" y="20" width="1" height="1" fill="#000"/><rect x="7" y="21" width="3" height="1" fill="#000"/><rect x="12" y="21" width="1" height="1" fill="#000"/><rect x="18" y="21" width="1" height="1" fill="#000"/><rect x="22" y="21" width="1" height="1" fill="#000"/><rect x="8" y="22" width="1" height="1" fill="#000"/><rect x="12" y="22" width="5" height="1" fill="#000"/><rect x="18" y="22" width="1" height="1" fill="#000"/><rect x="22" y="22" width="1" height="1" fill="#000"/></svg>
<svg style="position:absolute;left:71px;top:144px" width="28" height="28" shape-rendering="crispEdges"><rect x="6" y="4" width="5" height="1" fill="#000"/><rect x="5" y="5" width="1" height="1" fill="#000"/><rect x="6" y="5" width="5" height="1" fill="#fff"/><rect x="11" y="5" width="1" height="1" fill="#000"/><rect x="4" y="6" width="1" height="1" fill="#000"/><rect x="5" y="6" width="1" height="1" fill="#fff"/><rect x="11" y="6" width="1" height="1" fill="#fff"/><rect x="12" y="6" width="2" height="1" fill="#000"/><rect x="16" y="6" width="1" height="1" fill="#000"/><rect x="19" y="6" width="1" height="1" fill="#000"/><rect x="21" y="6" width="3" height="1" fill="#000"/><rect x="4" y="7" width="1" height="1" fill="#000"/><rect x="5" y="7" width="1" height="1" fill="#fff"/><rect x="11" y="7" width="2" height="1" fill="#000"/><rect x="14" y="7" width="1" height="1" fill="#000"/><rect x="16" y="7" width="1" height="1" fill="#000"/><rect x="19" y="7" width="1" height="1" fill="#000"/><rect x="22" y="7" width="1" height="1" fill="#000"/><rect x="4" y="8" width="1" height="1" fill="#000"/><rect x="5" y="8" width="1" height="1" fill="#fff"/><rect x="11" y="8" width="2" height="1" fill="#000"/><rect x="14" y="8" width="1" height="1" fill="#000"/><rect x="16" y="8" width="1" height="1" fill="#000"/><rect x="19" y="8" width="1" height="1" fill="#000"/><rect x="22" y="8" width="1" height="1" fill="#000"/><rect x="4" y="9" width="1" height="1" fill="#000"/><rect x="5" y="9" width="1" height="1" fill="#fff"/><rect x="11" y="9" width="2" height="1" fill="#000"/><rect x="14" y="9" width="1" height="1" fill="#000"/><rect x="16" y="9" width="1" height="1" fill="#000"/><rect x="19" y="9" width="1" height="1" fill="#000"/><rect x="22" y="9" width="1" height="1" fill="#000"/><rect x="4" y="10" width="1" height="1" fill="#000"/><rect x="5" y="10" width="1" height="1" fill="#fff"/><rect x="11" y="10" width="1" height="1" fill="#fff"/><rect x="12" y="10" width="2" height="1" fill="#000"/><rect x="17" y="10" width="2" height="1" fill="#000"/><rect x="22" y="10" width="1" height="1" fill="#000"/><rect x="5" y="11" width="1" height="1" fill="#000"/><rect x="6" y="11" width="5" height="1" fill="#fff"/><rect x="11" y="11" width="1" height="1" fill="#000"/><rect x="6" y="12" width="5" height="1" fill="#000"/><rect x="8" y="13" width="1" height="1" fill="#000"/><rect x="7" y="14" width="3" height="1" fill="#000"/><rect x="13" y="14" width="3" height="1" fill="#000"/><rect x="18" y="14" width="1" height="1" fill="#000"/><rect x="22" y="14" width="1" height="1" fill="#000"/><rect x="7" y="15" width="3" height="1" fill="#000"/><rect x="12" y="15" width="1" height="1" fill="#000"/><rect x="16" y="15" width="1" height="1" fill="#000"/><rect x="18" y="15" width="1" height="1" fill="#000"/><rect x="22" y="15" width="1" height="1" fill="#000"/><rect x="7" y="16" width="3" height="1" fill="#000"/><rect x="16" y="16" width="1" height="1" fill="#000"/><rect x="19" y="16" width="1" height="1" fill="#000"/><rect x="21" y="16" width="1" height="1" fill="#000"/><rect x="7" y="17" width="3" height="1" fill="#000"/><rect x="16" y="17" width="1" height="1" fill="#000"/><rect x="19" y="17" width="1" height="1" fill="#000"/><rect x="21" y="17" width="1" height="1" fill="#000"/><rect x="7" y="18" width="3" height="1" fill="#000"/><rect x="15" y="18" width="1" height="1" fill="#000"/><rect x="20" y="18" width="1" height="1" fill="#000"/><rect x="7" y="19" width="3" height="1" fill="#000"/><rect x="14" y="19" width="1" height="1" fill="#000"/><rect x="19" y="19" width="1" height="1" fill="#000"/><rect x="21" y="19" width="1" height="1" fill="#000"/><rect x="7" y="20" width="3" height="1" fill="#000"/><rect x="13" y="20" width="1" height="1" fill="#000"/><rect x="19" y="20" width="1" height="1" fill="#000"/><rect x="21" y="20" width="1" height="1" fill="#000"/><rect x="7" y="21" width="3" height="1" fill="#000"/><rect x="12" y="21" width="1" height="1" fill="#000"/><rect x="18" y="21" width="1" height="1" fill="#000"/><rect x="22" y="21" width="1" height="1" fill="#000"/><rect x="8" y="22" width="1" height="1" fill="#000"/><rect x="12" y="22" width="5" height="1" fill="#000"/><rect x="18" y="22" width="1" height="1" fill="#000"/><rect x="22" y="22" width="1" height="1" fill="#000"/></svg>
<svg style="position:absolute;left:101px;top:144px" width="28" height="28" shape-rendering="crispEdges"><rect x="6" y="4" width="5" height="1" fill="#000"/><rect x="5" y="5" width="1" height="1" fill="#000"/><rect x="6" y="5" width="5" height="1" fill="#fff"/><rect x="11" y="5" width="1" height="1" fill="#000"/><rect x="4" y="6" width="1" height="1" fill="#000"/><rect x="5" y="6" width="1" height="1" fill="#fff"/><rect x="11" y="6" width="1" height="1" fill="#fff"/><rect x="12" y="6" width="2" height="1" fill="#000"/><rect x="16" y="6" width="1" height="1" fill="#000"/><rect x="19" y="6" width="1" height="1" fill="#000"/><rect x="21" y="6" width="3" height="1" fill="#000"/><rect x="4" y="7" width="1" height="1" fill="#000"/><rect x="5" y="7" width="1" height="1" fill="#fff"/><rect x="11" y="7" width="2" height="1" fill="#000"/><rect x="14" y="7" width="1" height="1" fill="#000"/><rect x="16" y="7" width="1" height="1" fill="#000"/><rect x="19" y="7" width="1" height="1" fill="#000"/><rect x="22" y="7" width="1" height="1" fill="#000"/><rect x="4" y="8" width="1" height="1" fill="#000"/><rect x="5" y="8" width="1" height="1" fill="#fff"/><rect x="11" y="8" width="2" height="1" fill="#000"/><rect x="14" y="8" width="1" height="1" fill="#000"/><rect x="16" y="8" width="1" height="1" fill="#000"/><rect x="19" y="8" width="1" height="1" fill="#000"/><rect x="22" y="8" width="1" height="1" fill="#000"/><rect x="4" y="9" width="1" height="1" fill="#000"/><rect x="5" y="9" width="1" height="1" fill="#fff"/><rect x="11" y="9" width="2" height="1" fill="#000"/><rect x="14" y="9" width="1" height="1" fill="#000"/><rect x="16" y="9" width="1" height="1" fill="#000"/><rect x="19" y="9" width="1" height="1" fill="#000"/><rect x="22" y="9" width="1" height="1" fill="#000"/><rect x="4" y="10" width="1" height="1" fill="#000"/><rect x="5" y="10" width="1" height="1" fill="#fff"/><rect x="11" y="10" width="1" height="1" fill="#fff"/><rect x="12" y="10" width="2" height="1" fill="#000"/><rect x="17" y="10" width="2" height="1" fill="#000"/><rect x="22" y="10" width="1" height="1" fill="#000"/><rect x="5" y="11" width="1" height="1" fill="#000"/><rect x="6" y="11" width="5" height="1" fill="#fff"/><rect x="11" y="11" width="1" height="1" fill="#000"/><rect x="6" y="12" width="5" height="1" fill="#000"/><rect x="7" y="13" width="2" height="1" fill="#000"/><rect x="7" y="14" width="3" height="1" fill="#000"/><rect x="7" y="15" width="2" height="1" fill="#000"/><rect x="10" y="15" width="3" height="1" fill="#000"/><rect x="14" y="15" width="1" height="1" fill="#000"/><rect x="17" y="15" width="1" height="1" fill="#000"/><rect x="19" y="15" width="1" height="1" fill="#000"/><rect x="22" y="15" width="1" height="1" fill="#000"/><rect x="7" y="16" width="2" height="1" fill="#000"/><rect x="10" y="16" width="1" height="1" fill="#000"/><rect x="14" y="16" width="1" height="1" fill="#000"/><rect x="17" y="16" width="1" height="1" fill="#000"/><rect x="19" y="16" width="1" height="1" fill="#000"/><rect x="22" y="16" width="1" height="1" fill="#000"/><rect x="7" y="17" width="2" height="1" fill="#000"/><rect x="10" y="17" width="3" height="1" fill="#000"/><rect x="14" y="17" width="1" height="1" fill="#000"/><rect x="17" y="17" width="1" height="1" fill="#000"/><rect x="19" y="17" width="1" height="1" fill="#000"/><rect x="22" y="17" width="1" height="1" fill="#000"/><rect x="7" y="18" width="2" height="1" fill="#000"/><rect x="10" y="18" width="1" height="1" fill="#000"/><rect x="14" y="18" width="1" height="1" fill="#000"/><rect x="17" y="18" width="1" height="1" fill="#000"/><rect x="19" y="18" width="1" height="1" fill="#000"/><rect x="22" y="18" width="1" height="1" fill="#000"/><rect x="7" y="19" width="2" height="1" fill="#000"/><rect x="10" y="19" width="1" height="1" fill="#000"/><rect x="15" y="19" width="2" height="1" fill="#000"/><rect x="19" y="19" width="2" height="1" fill="#000"/><rect x="22" y="19" width="2" height="1" fill="#000"/><rect x="7" y="20" width="3" height="1" fill="#000"/><rect x="7" y="21" width="3" height="1" fill="#000"/><rect x="8" y="22" width="2" height="1" fill="#000"/></svg>
<div style="position:absolute;left:138px;top:144px;width:26px;height:26px;border:1px solid #000;"></div>
<div style="position:absolute;left:139px;top:145px;width:23px;height:23px;background:#C0C0C0;border-style:solid;border-width:2px 1px 1px 2px;border-color:#808080 #fff #fff #808080"></div>
<svg style="position:absolute;left:138px;top:144px" width="28" height="28" shape-rendering="crispEdges"><rect x="11" y="8" width="1" height="1" fill="#000"/><rect x="11" y="9" width="1" height="1" fill="#000"/><rect x="11" y="10" width="1" height="1" fill="#000"/><rect x="11" y="11" width="1" height="1" fill="#000"/><rect x="10" y="12" width="1" height="1" fill="#000"/><rect x="12" y="12" width="1" height="1" fill="#000"/><rect x="10" y="13" width="1" height="1" fill="#000"/><rect x="12" y="13" width="1" height="1" fill="#000"/><rect x="9" y="14" width="1" height="1" fill="#000"/><rect x="12" y="14" width="1" height="1" fill="#000"/><rect x="9" y="15" width="1" height="1" fill="#000"/><rect x="12" y="15" width="1" height="1" fill="#000"/><rect x="9" y="16" width="1" height="1" fill="#000"/><rect x="13" y="16" width="3" height="1" fill="#000"/><rect x="8" y="17" width="1" height="1" fill="#000"/><rect x="15" y="17" width="1" height="1" fill="#000"/><rect x="8" y="18" width="1" height="1" fill="#000"/><rect x="16" y="18" width="1" height="1" fill="#000"/><rect x="5" y="19" width="4" height="1" fill="#000"/><rect x="16" y="19" width="5" height="1" fill="#000"/><rect x="5" y="20" width="1" height="1" fill="#000"/><rect x="20" y="20" width="1" height="1" fill="#000"/><rect x="5" y="21" width="1" height="1" fill="#000"/><rect x="21" y="21" width="3" height="1" fill="#000"/></svg>
<div style="position:absolute;left:168px;top:144px;width:26px;height:26px;border:1px solid #000;"></div>
<div style="position:absolute;left:169px;top:145px;width:23px;height:23px;background:#C0C0C0;border-style:solid;border-width:1px 2px 2px 1px;border-color:#fff #808080 #808080 #fff"></div>
<svg style="position:absolute;left:168px;top:144px" width="28" height="28" shape-rendering="crispEdges"><rect x="10" y="7" width="4" height="1" fill="#000"/><rect x="10" y="8" width="1" height="1" fill="#000"/><rect x="11" y="8" width="2" height="1" fill="#D4D4D4"/><rect x="13" y="8" width="4" height="1" fill="#000"/><rect x="10" y="9" width="1" height="1" fill="#000"/><rect x="11" y="9" width="2" height="1" fill="#D4D4D4"/><rect x="13" y="9" width="1" height="1" fill="#000"/><rect x="14" y="9" width="2" height="1" fill="#D4D4D4"/><rect x="16" y="9" width="1" height="1" fill="#000"/><rect x="7" y="10" width="4" height="1" fill="#000"/><rect x="11" y="10" width="2" height="1" fill="#D4D4D4"/><rect x="13" y="10" width="1" height="1" fill="#000"/><rect x="14" y="10" width="2" height="1" fill="#D4D4D4"/><rect x="16" y="10" width="1" height="1" fill="#000"/><rect x="7" y="11" width="1" height="1" fill="#000"/><rect x="8" y="11" width="2" height="1" fill="#D4D4D4"/><rect x="10" y="11" width="1" height="1" fill="#000"/><rect x="11" y="11" width="2" height="1" fill="#D4D4D4"/><rect x="13" y="11" width="1" height="1" fill="#000"/><rect x="14" y="11" width="2" height="1" fill="#D4D4D4"/><rect x="16" y="11" width="4" height="1" fill="#000"/><rect x="7" y="12" width="1" height="1" fill="#000"/><rect x="8" y="12" width="2" height="1" fill="#D4D4D4"/><rect x="10" y="12" width="1" height="1" fill="#000"/><rect x="11" y="12" width="2" height="1" fill="#D4D4D4"/><rect x="13" y="12" width="1" height="1" fill="#000"/><rect x="14" y="12" width="2" height="1" fill="#D4D4D4"/><rect x="16" y="12" width="1" height="1" fill="#000"/><rect x="17" y="12" width="2" height="1" fill="#D4D4D4"/><rect x="19" y="12" width="1" height="1" fill="#000"/><rect x="7" y="13" width="1" height="1" fill="#000"/><rect x="8" y="13" width="2" height="1" fill="#D4D4D4"/><rect x="10" y="13" width="1" height="1" fill="#000"/><rect x="11" y="13" width="2" height="1" fill="#D4D4D4"/><rect x="13" y="13" width="1" height="1" fill="#000"/><rect x="14" y="13" width="2" height="1" fill="#D4D4D4"/><rect x="16" y="13" width="1" height="1" fill="#000"/><rect x="17" y="13" width="2" height="1" fill="#D4D4D4"/><rect x="19" y="13" width="4" height="1" fill="#000"/><rect x="4" y="14" width="4" height="1" fill="#000"/><rect x="8" y="14" width="2" height="1" fill="#D4D4D4"/><rect x="10" y="14" width="1" height="1" fill="#000"/><rect x="11" y="14" width="2" height="1" fill="#D4D4D4"/><rect x="13" y="14" width="1" height="1" fill="#000"/><rect x="14" y="14" width="2" height="1" fill="#D4D4D4"/><rect x="16" y="14" width="1" height="1" fill="#000"/><rect x="17" y="14" width="2" height="1" fill="#D4D4D4"/><rect x="19" y="14" width="1" height="1" fill="#000"/><rect x="20" y="14" width="2" height="1" fill="#D4D4D4"/><rect x="22" y="14" width="1" height="1" fill="#000"/><rect x="4" y="15" width="1" height="1" fill="#000"/><rect x="5" y="15" width="2" height="1" fill="#D4D4D4"/><rect x="7" y="15" width="1" height="1" fill="#000"/><rect x="8" y="15" width="2" height="1" fill="#D4D4D4"/><rect x="10" y="15" width="1" height="1" fill="#000"/><rect x="11" y="15" width="2" height="1" fill="#D4D4D4"/><rect x="13" y="15" width="1" height="1" fill="#000"/><rect x="14" y="15" width="2" height="1" fill="#D4D4D4"/><rect x="16" y="15" width="1" height="1" fill="#000"/><rect x="17" y="15" width="2" height="1" fill="#D4D4D4"/><rect x="19" y="15" width="1" height="1" fill="#000"/><rect x="20" y="15" width="2" height="1" fill="#D4D4D4"/><rect x="22" y="15" width="1" height="1" fill="#000"/><rect x="4" y="16" width="1" height="1" fill="#000"/><rect x="5" y="16" width="2" height="1" fill="#D4D4D4"/><rect x="7" y="16" width="1" height="1" fill="#000"/><rect x="8" y="16" width="2" height="1" fill="#D4D4D4"/><rect x="10" y="16" width="1" height="1" fill="#000"/><rect x="11" y="16" width="2" height="1" fill="#D4D4D4"/><rect x="13" y="16" width="1" height="1" fill="#000"/><rect x="14" y="16" width="2" height="1" fill="#D4D4D4"/><rect x="16" y="16" width="1" height="1" fill="#000"/><rect x="17" y="16" width="2" height="1" fill="#D4D4D4"/><rect x="19" y="16" width="1" height="1" fill="#000"/><rect x="20" y="16" width="2" height="1" fill="#D4D4D4"/><rect x="22" y="16" width="1" height="1" fill="#000"/><rect x="4" y="17" width="1" height="1" fill="#000"/><rect x="5" y="17" width="2" height="1" fill="#D4D4D4"/><rect x="7" y="17" width="1" height="1" fill="#000"/><rect x="8" y="17" width="2" height="1" fill="#D4D4D4"/><rect x="10" y="17" width="1" height="1" fill="#000"/><rect x="11" y="17" width="2" height="1" fill="#D4D4D4"/><rect x="13" y="17" width="1" height="1" fill="#000"/><rect x="14" y="17" width="2" height="1" fill="#D4D4D4"/><rect x="16" y="17" width="1" height="1" fill="#000"/><rect x="17" y="17" width="2" height="1" fill="#D4D4D4"/><rect x="19" y="17" width="1" height="1" fill="#000"/><rect x="20" y="17" width="2" height="1" fill="#D4D4D4"/><rect x="22" y="17" width="1" height="1" fill="#000"/><rect x="4" y="18" width="1" height="1" fill="#000"/><rect x="5" y="18" width="2" height="1" fill="#D4D4D4"/><rect x="7" y="18" width="1" height="1" fill="#000"/><rect x="8" y="18" width="2" height="1" fill="#D4D4D4"/><rect x="10" y="18" width="1" height="1" fill="#000"/><rect x="11" y="18" width="2" height="1" fill="#D4D4D4"/><rect x="13" y="18" width="1" height="1" fill="#000"/><rect x="14" y="18" width="2" height="1" fill="#D4D4D4"/><rect x="16" y="18" width="1" height="1" fill="#000"/><rect x="17" y="18" width="2" height="1" fill="#D4D4D4"/><rect x="19" y="18" width="1" height="1" fill="#000"/><rect x="20" y="18" width="2" height="1" fill="#D4D4D4"/><rect x="22" y="18" width="1" height="1" fill="#000"/><rect x="4" y="19" width="1" height="1" fill="#000"/><rect x="5" y="19" width="2" height="1" fill="#D4D4D4"/><rect x="7" y="19" width="1" height="1" fill="#000"/><rect x="8" y="19" width="2" height="1" fill="#D4D4D4"/><rect x="10" y="19" width="1" height="1" fill="#000"/><rect x="11" y="19" width="2" height="1" fill="#D4D4D4"/><rect x="13" y="19" width="1" height="1" fill="#000"/><rect x="14" y="19" width="2" height="1" fill="#D4D4D4"/><rect x="16" y="19" width="1" height="1" fill="#000"/><rect x="17" y="19" width="2" height="1" fill="#D4D4D4"/><rect x="19" y="19" width="1" height="1" fill="#000"/><rect x="20" y="19" width="2" height="1" fill="#D4D4D4"/><rect x="22" y="19" width="1" height="1" fill="#000"/><rect x="4" y="20" width="1" height="1" fill="#000"/><rect x="5" y="20" width="2" height="1" fill="#D4D4D4"/><rect x="7" y="20" width="1" height="1" fill="#000"/><rect x="8" y="20" width="2" height="1" fill="#D4D4D4"/><rect x="10" y="20" width="1" height="1" fill="#000"/><rect x="11" y="20" width="2" height="1" fill="#D4D4D4"/><rect x="13" y="20" width="1" height="1" fill="#000"/><rect x="14" y="20" width="2" height="1" fill="#D4D4D4"/><rect x="16" y="20" width="1" height="1" fill="#000"/><rect x="17" y="20" width="2" height="1" fill="#D4D4D4"/><rect x="19" y="20" width="1" height="1" fill="#000"/><rect x="20" y="20" width="2" height="1" fill="#D4D4D4"/><rect x="22" y="20" width="1" height="1" fill="#000"/><rect x="4" y="21" width="1" height="1" fill="#000"/><rect x="5" y="21" width="2" height="1" fill="#D4D4D4"/><rect x="7" y="21" width="1" height="1" fill="#000"/><rect x="8" y="21" width="2" height="1" fill="#D4D4D4"/><rect x="10" y="21" width="1" height="1" fill="#000"/><rect x="11" y="21" width="2" height="1" fill="#D4D4D4"/><rect x="13" y="21" width="1" height="1" fill="#000"/><rect x="14" y="21" width="2" height="1" fill="#D4D4D4"/><rect x="16" y="21" width="1" height="1" fill="#000"/><rect x="17" y="21" width="2" height="1" fill="#D4D4D4"/><rect x="19" y="21" width="1" height="1" fill="#000"/><rect x="20" y="21" width="2" height="1" fill="#D4D4D4"/><rect x="22" y="21" width="1" height="1" fill="#000"/><rect x="4" y="22" width="1" height="1" fill="#000"/><rect x="5" y="22" width="2" height="1" fill="#D4D4D4"/><rect x="7" y="22" width="1" height="1" fill="#000"/><rect x="8" y="22" width="2" height="1" fill="#D4D4D4"/><rect x="10" y="22" width="1" height="1" fill="#000"/><rect x="11" y="22" width="2" height="1" fill="#D4D4D4"/><rect x="13" y="22" width="1" height="1" fill="#000"/><rect x="14" y="22" width="2" height="1" fill="#D4D4D4"/><rect x="16" y="22" width="1" height="1" fill="#000"/><rect x="17" y="22" width="2" height="1" fill="#D4D4D4"/><rect x="19" y="22" width="1" height="1" fill="#000"/><rect x="20" y="22" width="2" height="1" fill="#D4D4D4"/><rect x="22" y="22" width="1" height="1" fill="#000"/></svg>
<div style="position:absolute;left:205px;top:144px;width:26px;height:26px;border:1px solid #000;"></div>
<div style="position:absolute;left:206px;top:145px;width:23px;height:23px;background:#C0C0C0;border-style:solid;border-width:1px 2px 2px 1px;border-color:#fff #808080 #808080 #fff"></div>
<svg style="position:absolute;left:205px;top:144px" width="28" height="28" shape-rendering="crispEdges"><rect x="3" y="3" width="21" height="1" fill="#000"/><rect x="3" y="4" width="1" height="1" fill="#000"/><rect x="4" y="4" width="1" height="1" fill="#fff"/><rect x="5" y="4" width="1" height="1" fill="#000"/><rect x="6" y="4" width="1" height="1" fill="#fff"/><rect x="7" y="4" width="1" height="1" fill="#000"/><rect x="8" y="4" width="1" height="1" fill="#fff"/><rect x="9" y="4" width="1" height="1" fill="#000"/><rect x="10" y="4" width="1" height="1" fill="#fff"/><rect x="11" y="4" width="1" height="1" fill="#000"/><rect x="12" y="4" width="1" height="1" fill="#fff"/><rect x="13" y="4" width="1" height="1" fill="#000"/><rect x="14" y="4" width="1" height="1" fill="#fff"/><rect x="15" y="4" width="1" height="1" fill="#000"/><rect x="16" y="4" width="1" height="1" fill="#fff"/><rect x="17" y="4" width="1" height="1" fill="#000"/><rect x="18" y="4" width="1" height="1" fill="#fff"/><rect x="19" y="4" width="2" height="1" fill="#000"/><rect x="21" y="4" width="2" height="1" fill="#fff"/><rect x="23" y="4" width="1" height="1" fill="#000"/><rect x="3" y="5" width="1" height="1" fill="#000"/><rect x="4" y="5" width="1" height="1" fill="#fff"/><rect x="5" y="5" width="2" height="1" fill="#000"/><rect x="7" y="5" width="1" height="1" fill="#fff"/><rect x="8" y="5" width="1" height="1" fill="#000"/><rect x="9" y="5" width="1" height="1" fill="#fff"/><rect x="10" y="5" width="1" height="1" fill="#000"/><rect x="11" y="5" width="1" height="1" fill="#fff"/><rect x="12" y="5" width="1" height="1" fill="#000"/><rect x="13" y="5" width="1" height="1" fill="#fff"/><rect x="14" y="5" width="1" height="1" fill="#000"/><rect x="15" y="5" width="1" height="1" fill="#fff"/><rect x="16" y="5" width="1" height="1" fill="#000"/><rect x="17" y="5" width="1" height="1" fill="#fff"/><rect x="18" y="5" width="1" height="1" fill="#000"/><rect x="19" y="5" width="1" height="1" fill="#fff"/><rect x="20" y="5" width="1" height="1" fill="#000"/><rect x="21" y="5" width="2" height="1" fill="#fff"/><rect x="23" y="5" width="1" height="1" fill="#000"/><rect x="3" y="6" width="21" height="1" fill="#000"/><rect x="3" y="7" width="1" height="1" fill="#000"/><rect x="4" y="7" width="19" height="1" fill="#fff"/><rect x="23" y="7" width="1" height="1" fill="#000"/><rect x="3" y="8" width="1" height="1" fill="#000"/><rect x="4" y="8" width="3" height="1" fill="#fff"/><rect x="7" y="8" width="15" height="1" fill="#000"/><rect x="22" y="8" width="1" height="1" fill="#fff"/><rect x="23" y="8" width="1" height="1" fill="#000"/><rect x="3" y="9" width="1" height="1" fill="#000"/><rect x="4" y="9" width="3" height="1" fill="#fff"/><rect x="7" y="9" width="1" height="1" fill="#000"/><rect x="8" y="9" width="13" height="1" fill="#fff"/><rect x="21" y="9" width="1" height="1" fill="#000"/><rect x="22" y="9" width="1" height="1" fill="#fff"/><rect x="23" y="9" width="1" height="1" fill="#000"/><rect x="3" y="10" width="1" height="1" fill="#000"/><rect x="4" y="10" width="3" height="1" fill="#fff"/><rect x="7" y="10" width="1" height="1" fill="#000"/><rect x="8" y="10" width="13" height="1" fill="#fff"/><rect x="21" y="10" width="1" height="1" fill="#000"/><rect x="22" y="10" width="1" height="1" fill="#fff"/><rect x="23" y="10" width="1" height="1" fill="#000"/><rect x="3" y="11" width="1" height="1" fill="#000"/><rect x="4" y="11" width="3" height="1" fill="#fff"/><rect x="7" y="11" width="15" height="1" fill="#000"/><rect x="22" y="11" width="1" height="1" fill="#fff"/><rect x="23" y="11" width="1" height="1" fill="#000"/><rect x="3" y="12" width="1" height="1" fill="#000"/><rect x="4" y="12" width="19" height="1" fill="#fff"/><rect x="23" y="12" width="1" height="1" fill="#000"/><rect x="3" y="13" width="1" height="1" fill="#000"/><rect x="4" y="13" width="9" height="1" fill="#fff"/><rect x="13" y="13" width="9" height="1" fill="#000"/><rect x="22" y="13" width="1" height="1" fill="#fff"/><rect x="23" y="13" width="1" height="1" fill="#000"/><rect x="3" y="14" width="1" height="1" fill="#000"/><rect x="4" y="14" width="2" height="1" fill="#fff"/><rect x="6" y="14" width="1" height="1" fill="#000"/><rect x="7" y="14" width="2" height="1" fill="#fff"/><rect x="9" y="14" width="1" height="1" fill="#000"/><rect x="10" y="14" width="1" height="1" fill="#fff"/><rect x="11" y="14" width="1" height="1" fill="#000"/><rect x="12" y="14" width="1" height="1" fill="#fff"/><rect x="13" y="14" width="1" height="1" fill="#000"/><rect x="14" y="14" width="7" height="1" fill="#fff"/><rect x="21" y="14" width="1" height="1" fill="#000"/><rect x="22" y="14" width="1" height="1" fill="#fff"/><rect x="23" y="14" width="1" height="1" fill="#000"/><rect x="3" y="15" width="1" height="1" fill="#000"/><rect x="4" y="15" width="3" height="1" fill="#fff"/><rect x="7" y="15" width="1" height="1" fill="#000"/><rect x="8" y="15" width="1" height="1" fill="#fff"/><rect x="9" y="15" width="1" height="1" fill="#000"/><rect x="10" y="15" width="3" height="1" fill="#fff"/><rect x="13" y="15" width="1" height="1" fill="#000"/><rect x="14" y="15" width="7" height="1" fill="#fff"/><rect x="21" y="15" width="1" height="1" fill="#000"/><rect x="22" y="15" width="1" height="1" fill="#fff"/><rect x="23" y="15" width="1" height="1" fill="#000"/><rect x="3" y="16" width="1" height="1" fill="#000"/><rect x="4" y="16" width="9" height="1" fill="#fff"/><rect x="13" y="16" width="9" height="1" fill="#000"/><rect x="22" y="16" width="1" height="1" fill="#fff"/><rect x="23" y="16" width="1" height="1" fill="#000"/><rect x="3" y="17" width="1" height="1" fill="#000"/><rect x="4" y="17" width="19" height="1" fill="#fff"/><rect x="23" y="17" width="1" height="1" fill="#000"/><rect x="3" y="18" width="1" height="1" fill="#000"/><rect x="4" y="18" width="9" height="1" fill="#fff"/><rect x="13" y="18" width="9" height="1" fill="#000"/><rect x="22" y="18" width="1" height="1" fill="#fff"/><rect x="23" y="18" width="1" height="1" fill="#000"/><rect x="3" y="19" width="1" height="1" fill="#000"/><rect x="4" y="19" width="3" height="1" fill="#fff"/><rect x="7" y="19" width="1" height="1" fill="#000"/><rect x="8" y="19" width="2" height="1" fill="#fff"/><rect x="10" y="19" width="1" height="1" fill="#000"/><rect x="11" y="19" width="2" height="1" fill="#fff"/><rect x="13" y="19" width="1" height="1" fill="#000"/><rect x="14" y="19" width="7" height="1" fill="#fff"/><rect x="21" y="19" width="1" height="1" fill="#000"/><rect x="22" y="19" width="1" height="1" fill="#fff"/><rect x="23" y="19" width="1" height="1" fill="#000"/><rect x="3" y="20" width="1" height="1" fill="#000"/><rect x="4" y="20" width="2" height="1" fill="#fff"/><rect x="6" y="20" width="1" height="1" fill="#000"/><rect x="7" y="20" width="1" height="1" fill="#fff"/><rect x="8" y="20" width="1" height="1" fill="#000"/><rect x="9" y="20" width="1" height="1" fill="#fff"/><rect x="10" y="20" width="1" height="1" fill="#000"/><rect x="11" y="20" width="2" height="1" fill="#fff"/><rect x="13" y="20" width="1" height="1" fill="#000"/><rect x="14" y="20" width="7" height="1" fill="#fff"/><rect x="21" y="20" width="1" height="1" fill="#000"/><rect x="22" y="20" width="1" height="1" fill="#fff"/><rect x="23" y="20" width="1" height="1" fill="#000"/><rect x="3" y="21" width="1" height="1" fill="#000"/><rect x="4" y="21" width="9" height="1" fill="#fff"/><rect x="13" y="21" width="9" height="1" fill="#000"/><rect x="22" y="21" width="1" height="1" fill="#fff"/><rect x="23" y="21" width="1" height="1" fill="#000"/><rect x="3" y="22" width="1" height="1" fill="#000"/><rect x="4" y="22" width="19" height="1" fill="#fff"/><rect x="23" y="22" width="1" height="1" fill="#000"/><rect x="3" y="23" width="21" height="1" fill="#000"/></svg>
<div style="position:absolute;left:242px;top:144px;width:26px;height:26px;border:1px solid #000;"></div>
<div style="position:absolute;left:243px;top:145px;width:23px;height:23px;background:#C0C0C0;border-style:solid;border-width:1px 2px 2px 1px;border-color:#fff #808080 #808080 #fff"></div>
<svg style="position:absolute;left:242px;top:144px" width="28" height="28" shape-rendering="crispEdges"><rect x="5" y="3" width="1" height="1" fill="#000"/><rect x="5" y="4" width="1" height="1" fill="#000"/><rect x="9" y="4" width="9" height="1" fill="#000"/><rect x="5" y="5" width="1" height="1" fill="#000"/><rect x="13" y="5" width="1" height="1" fill="#000"/><rect x="5" y="6" width="1" height="1" fill="#000"/><rect x="12" y="6" width="3" height="1" fill="#000"/><rect x="5" y="7" width="1" height="1" fill="#000"/><rect x="11" y="7" width="5" height="1" fill="#000"/><rect x="5" y="8" width="1" height="1" fill="#000"/><rect x="13" y="8" width="1" height="1" fill="#000"/><rect x="5" y="9" width="1" height="1" fill="#000"/><rect x="13" y="9" width="1" height="1" fill="#000"/><rect x="5" y="10" width="1" height="1" fill="#000"/><rect x="13" y="10" width="1" height="1" fill="#000"/><rect x="5" y="11" width="1" height="1" fill="#000"/><rect x="13" y="11" width="1" height="1" fill="#000"/><rect x="5" y="12" width="1" height="1" fill="#000"/><rect x="5" y="13" width="1" height="1" fill="#000"/><rect x="13" y="13" width="1" height="1" fill="#000"/><rect x="5" y="14" width="1" height="1" fill="#000"/><rect x="13" y="14" width="1" height="1" fill="#000"/><rect x="5" y="15" width="1" height="1" fill="#000"/><rect x="13" y="15" width="1" height="1" fill="#000"/><rect x="5" y="16" width="1" height="1" fill="#000"/><rect x="13" y="16" width="1" height="1" fill="#000"/><rect x="5" y="17" width="1" height="1" fill="#000"/><rect x="11" y="17" width="5" height="1" fill="#000"/><rect x="5" y="18" width="1" height="1" fill="#000"/><rect x="12" y="18" width="3" height="1" fill="#000"/><rect x="5" y="19" width="1" height="1" fill="#000"/><rect x="13" y="19" width="1" height="1" fill="#000"/><rect x="5" y="20" width="1" height="1" fill="#000"/><rect x="9" y="20" width="9" height="1" fill="#000"/><rect x="5" y="21" width="1" height="1" fill="#000"/><rect x="5" y="22" width="17" height="1" fill="#000"/></svg>
<div style="position:absolute;left:9px;top:173px;width:890px;height:1px;background:#000"></div>
<div style="position:absolute;left:9px;top:174px;width:890px;height:1px;background:#fff"></div>
<div style="position:absolute;left:279px;top:152.84px;height:12px;line-height:12px;font-size:12px;font-weight:400;color:#000;letter-spacing:0.05px;white-space:nowrap;">Plot Top:</div>
<div style="position:absolute;left:330px;top:148px;width:42px;height:18px;background:#fff;border:1px solid #000"></div>
<div style="position:absolute;left:332px;top:152.84px;height:12px;line-height:12px;font-size:12px;font-weight:400;color:#000;letter-spacing:0px;white-space:nowrap;">35.00</div>
<div style="position:absolute;left:376px;top:148px;width:9px;height:7px;background:#EBE9ED;border-style:solid;border-width:1px 2px 2px 1px;border-color:#fff #808080 #808080 #fff"></div>
<div style="position:absolute;left:376px;top:158px;width:9px;height:7px;background:#EBE9ED;border-style:solid;border-width:1px 2px 2px 1px;border-color:#fff #808080 #808080 #fff"></div>
<svg style="position:absolute;left:376px;top:148px" width="12" height="20"><path d="M3.5 6 H7.5 L5.5 3.5Z M3.5 13 H7.5 L5.5 15.5Z" fill="#000"/></svg>
<div style="position:absolute;left:397px;top:152.84px;height:12px;line-height:12px;font-size:12px;font-weight:400;color:#000;letter-spacing:0.05px;white-space:nowrap;">Plot Range:</div>
<div style="position:absolute;left:464px;top:148px;width:42px;height:18px;background:#fff;border:1px solid #000"></div>
<div style="position:absolute;left:466px;top:152.84px;height:12px;line-height:12px;font-size:12px;font-weight:400;color:#000;letter-spacing:0px;white-space:nowrap;">70.0</div>
<div style="position:absolute;left:510px;top:148px;width:9px;height:7px;background:#EBE9ED;border-style:solid;border-width:1px 2px 2px 1px;border-color:#fff #808080 #808080 #fff"></div>
<div style="position:absolute;left:510px;top:158px;width:9px;height:7px;background:#EBE9ED;border-style:solid;border-width:1px 2px 2px 1px;border-color:#fff #808080 #808080 #fff"></div>
<svg style="position:absolute;left:510px;top:148px" width="12" height="20"><path d="M3.5 6 H7.5 L5.5 3.5Z M3.5 13 H7.5 L5.5 15.5Z" fill="#000"/></svg>
<div style="position:absolute;left:11px;top:580px;width:26px;height:26px;border:1px solid #000;"></div>
<div style="position:absolute;left:12px;top:581px;width:23px;height:23px;background:#C0C0C0;border-style:solid;border-width:1px 2px 2px 1px;border-color:#fff #808080 #808080 #fff"></div>
<div style="position:absolute;left:41px;top:580px;width:26px;height:26px;border:1px solid #000;"></div>
<div style="position:absolute;left:42px;top:581px;width:23px;height:23px;background:#C0C0C0;border-style:solid;border-width:1px 2px 2px 1px;border-color:#fff #808080 #808080 #fff"></div>
<div style="position:absolute;left:71px;top:580px;width:26px;height:26px;border:1px solid #000;"></div>
<div style="position:absolute;left:72px;top:581px;width:23px;height:23px;background:#C0C0C0;border-style:solid;border-width:1px 2px 2px 1px;border-color:#fff #808080 #808080 #fff"></div>
<div style="position:absolute;left:101px;top:580px;width:26px;height:26px;border:1px solid #000;"></div>
<div style="position:absolute;left:102px;top:581px;width:23px;height:23px;background:#C0C0C0;border-style:solid;border-width:1px 2px 2px 1px;border-color:#fff #808080 #808080 #fff"></div>
<svg style="position:absolute;left:11px;top:580px" width="28" height="28" shape-rendering="crispEdges"><rect x="7" y="4" width="6" height="1" fill="#000"/><rect x="6" y="5" width="1" height="1" fill="#000"/><rect x="7" y="5" width="6" height="1" fill="#fff"/><rect x="13" y="5" width="1" height="1" fill="#000"/><rect x="5" y="6" width="1" height="1" fill="#000"/><rect x="6" y="6" width="1" height="1" fill="#fff"/><rect x="8" y="6" width="4" height="1" fill="#000"/><rect x="13" y="6" width="1" height="1" fill="#fff"/><rect x="14" y="6" width="1" height="1" fill="#000"/><rect x="4" y="7" width="1" height="1" fill="#000"/><rect x="5" y="7" width="1" height="1" fill="#fff"/><rect x="7" y="7" width="1" height="1" fill="#000"/><rect x="12" y="7" width="1" height="1" fill="#000"/><rect x="14" y="7" width="1" height="1" fill="#fff"/><rect x="15" y="7" width="1" height="1" fill="#000"/><rect x="4" y="8" width="1" height="1" fill="#000"/><rect x="5" y="8" width="1" height="1" fill="#fff"/><rect x="6" y="8" width="1" height="1" fill="#000"/><rect x="13" y="8" width="1" height="1" fill="#000"/><rect x="14" y="8" width="1" height="1" fill="#fff"/><rect x="15" y="8" width="1" height="1" fill="#000"/><rect x="4" y="9" width="1" height="1" fill="#000"/><rect x="5" y="9" width="1" height="1" fill="#fff"/><rect x="6" y="9" width="1" height="1" fill="#000"/><rect x="13" y="9" width="1" height="1" fill="#000"/><rect x="14" y="9" width="1" height="1" fill="#fff"/><rect x="15" y="9" width="1" height="1" fill="#000"/><rect x="4" y="10" width="1" height="1" fill="#000"/><rect x="5" y="10" width="1" height="1" fill="#fff"/><rect x="6" y="10" width="1" height="1" fill="#000"/><rect x="13" y="10" width="1" height="1" fill="#000"/><rect x="14" y="10" width="1" height="1" fill="#fff"/><rect x="15" y="10" width="1" height="1" fill="#000"/><rect x="4" y="11" width="1" height="1" fill="#000"/><rect x="5" y="11" width="1" height="1" fill="#fff"/><rect x="6" y="11" width="1" height="1" fill="#000"/><rect x="13" y="11" width="1" height="1" fill="#000"/><rect x="14" y="11" width="1" height="1" fill="#fff"/><rect x="15" y="11" width="1" height="1" fill="#000"/><rect x="4" y="12" width="1" height="1" fill="#000"/><rect x="5" y="12" width="1" height="1" fill="#fff"/><rect x="7" y="12" width="1" height="1" fill="#000"/><rect x="12" y="12" width="1" height="1" fill="#000"/><rect x="14" y="12" width="1" height="1" fill="#fff"/><rect x="15" y="12" width="1" height="1" fill="#000"/><rect x="5" y="13" width="1" height="1" fill="#000"/><rect x="6" y="13" width="1" height="1" fill="#fff"/><rect x="8" y="13" width="4" height="1" fill="#000"/><rect x="13" y="13" width="1" height="1" fill="#fff"/><rect x="14" y="13" width="1" height="1" fill="#000"/><rect x="6" y="14" width="1" height="1" fill="#000"/><rect x="7" y="14" width="6" height="1" fill="#fff"/><rect x="13" y="14" width="3" height="1" fill="#000"/><rect x="7" y="15" width="6" height="1" fill="#000"/><rect x="14" y="15" width="3" height="1" fill="#000"/><rect x="15" y="16" width="3" height="1" fill="#000"/><rect x="16" y="17" width="3" height="1" fill="#000"/><rect x="17" y="18" width="3" height="1" fill="#000"/><rect x="18" y="19" width="3" height="1" fill="#000"/><rect x="19" y="20" width="3" height="1" fill="#000"/><rect x="20" y="21" width="2" height="1" fill="#000"/></svg>
<svg style="position:absolute;left:41px;top:580px" width="28" height="28" shape-rendering="crispEdges"><rect x="6" y="4" width="5" height="1" fill="#000"/><rect x="5" y="5" width="1" height="1" fill="#000"/><rect x="6" y="5" width="5" height="1" fill="#fff"/><rect x="11" y="5" width="1" height="1" fill="#000"/><rect x="4" y="6" width="1" height="1" fill="#000"/><rect x="5" y="6" width="1" height="1" fill="#fff"/><rect x="11" y="6" width="1" height="1" fill="#fff"/><rect x="12" y="6" width="1" height="1" fill="#000"/><rect x="15" y="6" width="1" height="1" fill="#000"/><rect x="17" y="6" width="1" height="1" fill="#000"/><rect x="21" y="6" width="1" height="1" fill="#000"/><rect x="4" y="7" width="1" height="1" fill="#000"/><rect x="5" y="7" width="1" height="1" fill="#fff"/><rect x="11" y="7" width="1" height="1" fill="#fff"/><rect x="12" y="7" width="1" height="1" fill="#000"/><rect x="15" y="7" width="1" height="1" fill="#000"/><rect x="17" y="7" width="2" height="1" fill="#000"/><rect x="21" y="7" width="1" height="1" fill="#000"/><rect x="4" y="8" width="1" height="1" fill="#000"/><rect x="5" y="8" width="1" height="1" fill="#fff"/><rect x="11" y="8" width="1" height="1" fill="#fff"/><rect x="12" y="8" width="1" height="1" fill="#000"/><rect x="15" y="8" width="1" height="1" fill="#000"/><rect x="17" y="8" width="1" height="1" fill="#000"/><rect x="19" y="8" width="1" height="1" fill="#000"/><rect x="21" y="8" width="1" height="1" fill="#000"/><rect x="4" y="9" width="1" height="1" fill="#000"/><rect x="5" y="9" width="1" height="1" fill="#fff"/><rect x="11" y="9" width="1" height="1" fill="#fff"/><rect x="12" y="9" width="1" height="1" fill="#000"/><rect x="15" y="9" width="1" height="1" fill="#000"/><rect x="17" y="9" width="1" height="1" fill="#000"/><rect x="20" y="9" width="2" height="1" fill="#000"/><rect x="4" y="10" width="1" height="1" fill="#000"/><rect x="5" y="10" width="1" height="1" fill="#fff"/><rect x="11" y="10" width="1" height="1" fill="#fff"/><rect x="12" y="10" width="1" height="1" fill="#000"/><rect x="15" y="10" width="1" height="1" fill="#000"/><rect x="17" y="10" width="1" height="1" fill="#000"/><rect x="21" y="10" width="1" height="1" fill="#000"/><rect x="5" y="11" width="1" height="1" fill="#000"/><rect x="6" y="11" width="5" height="1" fill="#fff"/><rect x="11" y="11" width="1" height="1" fill="#000"/><rect x="6" y="12" width="5" height="1" fill="#000"/><rect x="8" y="13" width="1" height="1" fill="#000"/><rect x="7" y="14" width="3" height="1" fill="#000"/><rect x="13" y="14" width="3" height="1" fill="#000"/><rect x="18" y="14" width="1" height="1" fill="#000"/><rect x="22" y="14" width="1" height="1" fill="#000"/><rect x="7" y="15" width="3" height="1" fill="#000"/><rect x="12" y="15" width="1" height="1" fill="#000"/><rect x="16" y="15" width="1" height="1" fill="#000"/><rect x="18" y="15" width="1" height="1" fill="#000"/><rect x="22" y="15" width="1" height="1" fill="#000"/><rect x="7" y="16" width="3" height="1" fill="#000"/><rect x="16" y="16" width="1" height="1" fill="#000"/><rect x="19" y="16" width="1" height="1" fill="#000"/><rect x="21" y="16" width="1" height="1" fill="#000"/><rect x="7" y="17" width="3" height="1" fill="#000"/><rect x="16" y="17" width="1" height="1" fill="#000"/><rect x="19" y="17" width="1" height="1" fill="#000"/><rect x="21" y="17" width="1" height="1" fill="#000"/><rect x="7" y="18" width="3" height="1" fill="#000"/><rect x="15" y="18" width="1" height="1" fill="#000"/><rect x="20" y="18" width="1" height="1" fill="#000"/><rect x="7" y="19" width="3" height="1" fill="#000"/><rect x="14" y="19" width="1" height="1" fill="#000"/><rect x="19" y="19" width="1" height="1" fill="#000"/><rect x="21" y="19" width="1" height="1" fill="#000"/><rect x="7" y="20" width="3" height="1" fill="#000"/><rect x="13" y="20" width="1" height="1" fill="#000"/><rect x="19" y="20" width="1" height="1" fill="#000"/><rect x="21" y="20" width="1" height="1" fill="#000"/><rect x="7" y="21" width="3" height="1" fill="#000"/><rect x="12" y="21" width="1" height="1" fill="#000"/><rect x="18" y="21" width="1" height="1" fill="#000"/><rect x="22" y="21" width="1" height="1" fill="#000"/><rect x="8" y="22" width="1" height="1" fill="#000"/><rect x="12" y="22" width="5" height="1" fill="#000"/><rect x="18" y="22" width="1" height="1" fill="#000"/><rect x="22" y="22" width="1" height="1" fill="#000"/></svg>
<svg style="position:absolute;left:71px;top:580px" width="28" height="28" shape-rendering="crispEdges"><rect x="6" y="4" width="5" height="1" fill="#000"/><rect x="5" y="5" width="1" height="1" fill="#000"/><rect x="6" y="5" width="5" height="1" fill="#fff"/><rect x="11" y="5" width="1" height="1" fill="#000"/><rect x="4" y="6" width="1" height="1" fill="#000"/><rect x="5" y="6" width="1" height="1" fill="#fff"/><rect x="11" y="6" width="1" height="1" fill="#fff"/><rect x="12" y="6" width="2" height="1" fill="#000"/><rect x="16" y="6" width="1" height="1" fill="#000"/><rect x="19" y="6" width="1" height="1" fill="#000"/><rect x="21" y="6" width="3" height="1" fill="#000"/><rect x="4" y="7" width="1" height="1" fill="#000"/><rect x="5" y="7" width="1" height="1" fill="#fff"/><rect x="11" y="7" width="2" height="1" fill="#000"/><rect x="14" y="7" width="1" height="1" fill="#000"/><rect x="16" y="7" width="1" height="1" fill="#000"/><rect x="19" y="7" width="1" height="1" fill="#000"/><rect x="22" y="7" width="1" height="1" fill="#000"/><rect x="4" y="8" width="1" height="1" fill="#000"/><rect x="5" y="8" width="1" height="1" fill="#fff"/><rect x="11" y="8" width="2" height="1" fill="#000"/><rect x="14" y="8" width="1" height="1" fill="#000"/><rect x="16" y="8" width="1" height="1" fill="#000"/><rect x="19" y="8" width="1" height="1" fill="#000"/><rect x="22" y="8" width="1" height="1" fill="#000"/><rect x="4" y="9" width="1" height="1" fill="#000"/><rect x="5" y="9" width="1" height="1" fill="#fff"/><rect x="11" y="9" width="2" height="1" fill="#000"/><rect x="14" y="9" width="1" height="1" fill="#000"/><rect x="16" y="9" width="1" height="1" fill="#000"/><rect x="19" y="9" width="1" height="1" fill="#000"/><rect x="22" y="9" width="1" height="1" fill="#000"/><rect x="4" y="10" width="1" height="1" fill="#000"/><rect x="5" y="10" width="1" height="1" fill="#fff"/><rect x="11" y="10" width="1" height="1" fill="#fff"/><rect x="12" y="10" width="2" height="1" fill="#000"/><rect x="17" y="10" width="2" height="1" fill="#000"/><rect x="22" y="10" width="1" height="1" fill="#000"/><rect x="5" y="11" width="1" height="1" fill="#000"/><rect x="6" y="11" width="5" height="1" fill="#fff"/><rect x="11" y="11" width="1" height="1" fill="#000"/><rect x="6" y="12" width="5" height="1" fill="#000"/><rect x="8" y="13" width="1" height="1" fill="#000"/><rect x="7" y="14" width="3" height="1" fill="#000"/><rect x="13" y="14" width="3" height="1" fill="#000"/><rect x="18" y="14" width="1" height="1" fill="#000"/><rect x="22" y="14" width="1" height="1" fill="#000"/><rect x="7" y="15" width="3" height="1" fill="#000"/><rect x="12" y="15" width="1" height="1" fill="#000"/><rect x="16" y="15" width="1" height="1" fill="#000"/><rect x="18" y="15" width="1" height="1" fill="#000"/><rect x="22" y="15" width="1" height="1" fill="#000"/><rect x="7" y="16" width="3" height="1" fill="#000"/><rect x="16" y="16" width="1" height="1" fill="#000"/><rect x="19" y="16" width="1" height="1" fill="#000"/><rect x="21" y="16" width="1" height="1" fill="#000"/><rect x="7" y="17" width="3" height="1" fill="#000"/><rect x="16" y="17" width="1" height="1" fill="#000"/><rect x="19" y="17" width="1" height="1" fill="#000"/><rect x="21" y="17" width="1" height="1" fill="#000"/><rect x="7" y="18" width="3" height="1" fill="#000"/><rect x="15" y="18" width="1" height="1" fill="#000"/><rect x="20" y="18" width="1" height="1" fill="#000"/><rect x="7" y="19" width="3" height="1" fill="#000"/><rect x="14" y="19" width="1" height="1" fill="#000"/><rect x="19" y="19" width="1" height="1" fill="#000"/><rect x="21" y="19" width="1" height="1" fill="#000"/><rect x="7" y="20" width="3" height="1" fill="#000"/><rect x="13" y="20" width="1" height="1" fill="#000"/><rect x="19" y="20" width="1" height="1" fill="#000"/><rect x="21" y="20" width="1" height="1" fill="#000"/><rect x="7" y="21" width="3" height="1" fill="#000"/><rect x="12" y="21" width="1" height="1" fill="#000"/><rect x="18" y="21" width="1" height="1" fill="#000"/><rect x="22" y="21" width="1" height="1" fill="#000"/><rect x="8" y="22" width="1" height="1" fill="#000"/><rect x="12" y="22" width="5" height="1" fill="#000"/><rect x="18" y="22" width="1" height="1" fill="#000"/><rect x="22" y="22" width="1" height="1" fill="#000"/></svg>
<svg style="position:absolute;left:101px;top:580px" width="28" height="28" shape-rendering="crispEdges"><rect x="6" y="4" width="5" height="1" fill="#000"/><rect x="5" y="5" width="1" height="1" fill="#000"/><rect x="6" y="5" width="5" height="1" fill="#fff"/><rect x="11" y="5" width="1" height="1" fill="#000"/><rect x="4" y="6" width="1" height="1" fill="#000"/><rect x="5" y="6" width="1" height="1" fill="#fff"/><rect x="11" y="6" width="1" height="1" fill="#fff"/><rect x="12" y="6" width="2" height="1" fill="#000"/><rect x="16" y="6" width="1" height="1" fill="#000"/><rect x="19" y="6" width="1" height="1" fill="#000"/><rect x="21" y="6" width="3" height="1" fill="#000"/><rect x="4" y="7" width="1" height="1" fill="#000"/><rect x="5" y="7" width="1" height="1" fill="#fff"/><rect x="11" y="7" width="2" height="1" fill="#000"/><rect x="14" y="7" width="1" height="1" fill="#000"/><rect x="16" y="7" width="1" height="1" fill="#000"/><rect x="19" y="7" width="1" height="1" fill="#000"/><rect x="22" y="7" width="1" height="1" fill="#000"/><rect x="4" y="8" width="1" height="1" fill="#000"/><rect x="5" y="8" width="1" height="1" fill="#fff"/><rect x="11" y="8" width="2" height="1" fill="#000"/><rect x="14" y="8" width="1" height="1" fill="#000"/><rect x="16" y="8" width="1" height="1" fill="#000"/><rect x="19" y="8" width="1" height="1" fill="#000"/><rect x="22" y="8" width="1" height="1" fill="#000"/><rect x="4" y="9" width="1" height="1" fill="#000"/><rect x="5" y="9" width="1" height="1" fill="#fff"/><rect x="11" y="9" width="2" height="1" fill="#000"/><rect x="14" y="9" width="1" height="1" fill="#000"/><rect x="16" y="9" width="1" height="1" fill="#000"/><rect x="19" y="9" width="1" height="1" fill="#000"/><rect x="22" y="9" width="1" height="1" fill="#000"/><rect x="4" y="10" width="1" height="1" fill="#000"/><rect x="5" y="10" width="1" height="1" fill="#fff"/><rect x="11" y="10" width="1" height="1" fill="#fff"/><rect x="12" y="10" width="2" height="1" fill="#000"/><rect x="17" y="10" width="2" height="1" fill="#000"/><rect x="22" y="10" width="1" height="1" fill="#000"/><rect x="5" y="11" width="1" height="1" fill="#000"/><rect x="6" y="11" width="5" height="1" fill="#fff"/><rect x="11" y="11" width="1" height="1" fill="#000"/><rect x="6" y="12" width="5" height="1" fill="#000"/><rect x="7" y="13" width="2" height="1" fill="#000"/><rect x="7" y="14" width="3" height="1" fill="#000"/><rect x="7" y="15" width="2" height="1" fill="#000"/><rect x="10" y="15" width="3" height="1" fill="#000"/><rect x="14" y="15" width="1" height="1" fill="#000"/><rect x="17" y="15" width="1" height="1" fill="#000"/><rect x="19" y="15" width="1" height="1" fill="#000"/><rect x="22" y="15" width="1" height="1" fill="#000"/><rect x="7" y="16" width="2" height="1" fill="#000"/><rect x="10" y="16" width="1" height="1" fill="#000"/><rect x="14" y="16" width="1" height="1" fill="#000"/><rect x="17" y="16" width="1" height="1" fill="#000"/><rect x="19" y="16" width="1" height="1" fill="#000"/><rect x="22" y="16" width="1" height="1" fill="#000"/><rect x="7" y="17" width="2" height="1" fill="#000"/><rect x="10" y="17" width="3" height="1" fill="#000"/><rect x="14" y="17" width="1" height="1" fill="#000"/><rect x="17" y="17" width="1" height="1" fill="#000"/><rect x="19" y="17" width="1" height="1" fill="#000"/><rect x="22" y="17" width="1" height="1" fill="#000"/><rect x="7" y="18" width="2" height="1" fill="#000"/><rect x="10" y="18" width="1" height="1" fill="#000"/><rect x="14" y="18" width="1" height="1" fill="#000"/><rect x="17" y="18" width="1" height="1" fill="#000"/><rect x="19" y="18" width="1" height="1" fill="#000"/><rect x="22" y="18" width="1" height="1" fill="#000"/><rect x="7" y="19" width="2" height="1" fill="#000"/><rect x="10" y="19" width="1" height="1" fill="#000"/><rect x="15" y="19" width="2" height="1" fill="#000"/><rect x="19" y="19" width="2" height="1" fill="#000"/><rect x="22" y="19" width="2" height="1" fill="#000"/><rect x="7" y="20" width="3" height="1" fill="#000"/><rect x="7" y="21" width="3" height="1" fill="#000"/><rect x="8" y="22" width="2" height="1" fill="#000"/></svg>
<div style="position:absolute;left:145px;top:580px;width:26px;height:26px;border:1px solid #000;"></div>
<div style="position:absolute;left:146px;top:581px;width:23px;height:23px;background:#C0C0C0;border-style:solid;border-width:1px 2px 2px 1px;border-color:#fff #808080 #808080 #fff"></div>
<svg style="position:absolute;left:145px;top:580px" width="28" height="28" shape-rendering="crispEdges"><rect x="3" y="3" width="21" height="1" fill="#000"/><rect x="3" y="4" width="1" height="1" fill="#000"/><rect x="4" y="4" width="1" height="1" fill="#fff"/><rect x="5" y="4" width="1" height="1" fill="#000"/><rect x="6" y="4" width="1" height="1" fill="#fff"/><rect x="7" y="4" width="1" height="1" fill="#000"/><rect x="8" y="4" width="1" height="1" fill="#fff"/><rect x="9" y="4" width="1" height="1" fill="#000"/><rect x="10" y="4" width="1" height="1" fill="#fff"/><rect x="11" y="4" width="1" height="1" fill="#000"/><rect x="12" y="4" width="1" height="1" fill="#fff"/><rect x="13" y="4" width="1" height="1" fill="#000"/><rect x="14" y="4" width="1" height="1" fill="#fff"/><rect x="15" y="4" width="1" height="1" fill="#000"/><rect x="16" y="4" width="1" height="1" fill="#fff"/><rect x="17" y="4" width="1" height="1" fill="#000"/><rect x="18" y="4" width="1" height="1" fill="#fff"/><rect x="19" y="4" width="2" height="1" fill="#000"/><rect x="21" y="4" width="2" height="1" fill="#fff"/><rect x="23" y="4" width="1" height="1" fill="#000"/><rect x="3" y="5" width="1" height="1" fill="#000"/><rect x="4" y="5" width="1" height="1" fill="#fff"/><rect x="5" y="5" width="2" height="1" fill="#000"/><rect x="7" y="5" width="1" height="1" fill="#fff"/><rect x="8" y="5" width="1" height="1" fill="#000"/><rect x="9" y="5" width="1" height="1" fill="#fff"/><rect x="10" y="5" width="1" height="1" fill="#000"/><rect x="11" y="5" width="1" height="1" fill="#fff"/><rect x="12" y="5" width="1" height="1" fill="#000"/><rect x="13" y="5" width="1" height="1" fill="#fff"/><rect x="14" y="5" width="1" height="1" fill="#000"/><rect x="15" y="5" width="1" height="1" fill="#fff"/><rect x="16" y="5" width="1" height="1" fill="#000"/><rect x="17" y="5" width="1" height="1" fill="#fff"/><rect x="18" y="5" width="1" height="1" fill="#000"/><rect x="19" y="5" width="1" height="1" fill="#fff"/><rect x="20" y="5" width="1" height="1" fill="#000"/><rect x="21" y="5" width="2" height="1" fill="#fff"/><rect x="23" y="5" width="1" height="1" fill="#000"/><rect x="3" y="6" width="21" height="1" fill="#000"/><rect x="3" y="7" width="1" height="1" fill="#000"/><rect x="4" y="7" width="19" height="1" fill="#fff"/><rect x="23" y="7" width="1" height="1" fill="#000"/><rect x="3" y="8" width="1" height="1" fill="#000"/><rect x="4" y="8" width="3" height="1" fill="#fff"/><rect x="7" y="8" width="15" height="1" fill="#000"/><rect x="22" y="8" width="1" height="1" fill="#fff"/><rect x="23" y="8" width="1" height="1" fill="#000"/><rect x="3" y="9" width="1" height="1" fill="#000"/><rect x="4" y="9" width="3" height="1" fill="#fff"/><rect x="7" y="9" width="1" height="1" fill="#000"/><rect x="8" y="9" width="13" height="1" fill="#fff"/><rect x="21" y="9" width="1" height="1" fill="#000"/><rect x="22" y="9" width="1" height="1" fill="#fff"/><rect x="23" y="9" width="1" height="1" fill="#000"/><rect x="3" y="10" width="1" height="1" fill="#000"/><rect x="4" y="10" width="3" height="1" fill="#fff"/><rect x="7" y="10" width="1" height="1" fill="#000"/><rect x="8" y="10" width="13" height="1" fill="#fff"/><rect x="21" y="10" width="1" height="1" fill="#000"/><rect x="22" y="10" width="1" height="1" fill="#fff"/><rect x="23" y="10" width="1" height="1" fill="#000"/><rect x="3" y="11" width="1" height="1" fill="#000"/><rect x="4" y="11" width="3" height="1" fill="#fff"/><rect x="7" y="11" width="15" height="1" fill="#000"/><rect x="22" y="11" width="1" height="1" fill="#fff"/><rect x="23" y="11" width="1" height="1" fill="#000"/><rect x="3" y="12" width="1" height="1" fill="#000"/><rect x="4" y="12" width="19" height="1" fill="#fff"/><rect x="23" y="12" width="1" height="1" fill="#000"/><rect x="3" y="13" width="1" height="1" fill="#000"/><rect x="4" y="13" width="9" height="1" fill="#fff"/><rect x="13" y="13" width="9" height="1" fill="#000"/><rect x="22" y="13" width="1" height="1" fill="#fff"/><rect x="23" y="13" width="1" height="1" fill="#000"/><rect x="3" y="14" width="1" height="1" fill="#000"/><rect x="4" y="14" width="2" height="1" fill="#fff"/><rect x="6" y="14" width="1" height="1" fill="#000"/><rect x="7" y="14" width="2" height="1" fill="#fff"/><rect x="9" y="14" width="1" height="1" fill="#000"/><rect x="10" y="14" width="1" height="1" fill="#fff"/><rect x="11" y="14" width="1" height="1" fill="#000"/><rect x="12" y="14" width="1" height="1" fill="#fff"/><rect x="13" y="14" width="1" height="1" fill="#000"/><rect x="14" y="14" width="7" height="1" fill="#fff"/><rect x="21" y="14" width="1" height="1" fill="#000"/><rect x="22" y="14" width="1" height="1" fill="#fff"/><rect x="23" y="14" width="1" height="1" fill="#000"/><rect x="3" y="15" width="1" height="1" fill="#000"/><rect x="4" y="15" width="3" height="1" fill="#fff"/><rect x="7" y="15" width="1" height="1" fill="#000"/><rect x="8" y="15" width="1" height="1" fill="#fff"/><rect x="9" y="15" width="1" height="1" fill="#000"/><rect x="10" y="15" width="3" height="1" fill="#fff"/><rect x="13" y="15" width="1" height="1" fill="#000"/><rect x="14" y="15" width="7" height="1" fill="#fff"/><rect x="21" y="15" width="1" height="1" fill="#000"/><rect x="22" y="15" width="1" height="1" fill="#fff"/><rect x="23" y="15" width="1" height="1" fill="#000"/><rect x="3" y="16" width="1" height="1" fill="#000"/><rect x="4" y="16" width="9" height="1" fill="#fff"/><rect x="13" y="16" width="9" height="1" fill="#000"/><rect x="22" y="16" width="1" height="1" fill="#fff"/><rect x="23" y="16" width="1" height="1" fill="#000"/><rect x="3" y="17" width="1" height="1" fill="#000"/><rect x="4" y="17" width="19" height="1" fill="#fff"/><rect x="23" y="17" width="1" height="1" fill="#000"/><rect x="3" y="18" width="1" height="1" fill="#000"/><rect x="4" y="18" width="9" height="1" fill="#fff"/><rect x="13" y="18" width="9" height="1" fill="#000"/><rect x="22" y="18" width="1" height="1" fill="#fff"/><rect x="23" y="18" width="1" height="1" fill="#000"/><rect x="3" y="19" width="1" height="1" fill="#000"/><rect x="4" y="19" width="3" height="1" fill="#fff"/><rect x="7" y="19" width="1" height="1" fill="#000"/><rect x="8" y="19" width="2" height="1" fill="#fff"/><rect x="10" y="19" width="1" height="1" fill="#000"/><rect x="11" y="19" width="2" height="1" fill="#fff"/><rect x="13" y="19" width="1" height="1" fill="#000"/><rect x="14" y="19" width="7" height="1" fill="#fff"/><rect x="21" y="19" width="1" height="1" fill="#000"/><rect x="22" y="19" width="1" height="1" fill="#fff"/><rect x="23" y="19" width="1" height="1" fill="#000"/><rect x="3" y="20" width="1" height="1" fill="#000"/><rect x="4" y="20" width="2" height="1" fill="#fff"/><rect x="6" y="20" width="1" height="1" fill="#000"/><rect x="7" y="20" width="1" height="1" fill="#fff"/><rect x="8" y="20" width="1" height="1" fill="#000"/><rect x="9" y="20" width="1" height="1" fill="#fff"/><rect x="10" y="20" width="1" height="1" fill="#000"/><rect x="11" y="20" width="2" height="1" fill="#fff"/><rect x="13" y="20" width="1" height="1" fill="#000"/><rect x="14" y="20" width="7" height="1" fill="#fff"/><rect x="21" y="20" width="1" height="1" fill="#000"/><rect x="22" y="20" width="1" height="1" fill="#fff"/><rect x="23" y="20" width="1" height="1" fill="#000"/><rect x="3" y="21" width="1" height="1" fill="#000"/><rect x="4" y="21" width="9" height="1" fill="#fff"/><rect x="13" y="21" width="9" height="1" fill="#000"/><rect x="22" y="21" width="1" height="1" fill="#fff"/><rect x="23" y="21" width="1" height="1" fill="#000"/><rect x="3" y="22" width="1" height="1" fill="#000"/><rect x="4" y="22" width="19" height="1" fill="#fff"/><rect x="23" y="22" width="1" height="1" fill="#000"/><rect x="3" y="23" width="21" height="1" fill="#000"/></svg>
<div style="position:absolute;left:9px;top:609px;width:890px;height:1px;background:#000"></div>
<div style="position:absolute;left:9px;top:610px;width:890px;height:1px;background:#fff"></div>
<div style="position:absolute;left:182px;top:588.84px;height:12px;line-height:12px;font-size:12px;font-weight:400;color:#000;letter-spacing:0.05px;white-space:nowrap;">Plot Top:</div>
<div style="position:absolute;left:233px;top:584px;width:42px;height:18px;background:#fff;border:1px solid #000"></div>
<div style="position:absolute;left:235px;top:588.84px;height:12px;line-height:12px;font-size:12px;font-weight:400;color:#000;letter-spacing:0px;white-space:nowrap;">180.0</div>
<div style="position:absolute;left:279px;top:584px;width:9px;height:7px;background:#EBE9ED;border-style:solid;border-width:1px 2px 2px 1px;border-color:#fff #808080 #808080 #fff"></div>
<div style="position:absolute;left:279px;top:594px;width:9px;height:7px;background:#EBE9ED;border-style:solid;border-width:1px 2px 2px 1px;border-color:#fff #808080 #808080 #fff"></div>
<svg style="position:absolute;left:279px;top:584px" width="12" height="20"><path d="M3.5 6 H7.5 L5.5 3.5Z M3.5 13 H7.5 L5.5 15.5Z" fill="#000"/></svg>
<div style="position:absolute;left:67px;top:191px;width:729px;height:2px;background:#8C8A8E"></div>
<div style="position:absolute;left:67px;top:191px;width:2px;height:317px;background:#8C8A8E"></div>
<div style="position:absolute;left:795px;top:193px;width:1px;height:296px;background:#fff"></div>
<svg style="position:absolute;left:69px;top:193px" width="726" height="296" shape-rendering="crispEdges"><rect x="0" y="0" width="726" height="296" fill="#000"/><path d="M41.5 0V296M72.5 0V296M95.5 0V296M114.5 0V296M131.5 0V296M145.5 0V296M157.5 0V296M168.5 0V296M242.5 0V296M285.5 0V296M315.5 0V296M339.5 0V296M358.5 0V296M374.5 0V296M388.5 0V296M401.5 0V296M412.5 0V296M485.5 0V296M528.5 0V296M558.5 0V296M582.5 0V296M601.5 0V296M618.5 0V296M632.5 0V296M644.5 0V296M655.5 0V296M0 0.5H726M0 42.5H726M0 84.5H726M0 126.5H726M0 169.5H726M0 211.5H726M0 253.5H726M0 295.5H726" stroke="#008000" stroke-width="1" fill="none"/></svg>
<svg style="position:absolute;left:69px;top:193px" width="726" height="296"><polyline points="-0.7,83.3 12.5,80.6 24.6,79.0 31.2,77.8 41.2,75.0 47.8,73.4 54.4,72.5 62.0,73.4 66.5,75.4 72.0,75.4 73.0,74.3 83.0,74.3 87.4,75.9 91.0,77.4 95.4,80.1 99.3,84.0 101.5,87.3 104.8,93.3 108.6,100.0 112.5,107.7 115.8,115.4 119.6,124.2 122.9,133.0 127.3,140.1 130.1,133.0 132.3,123.1 135.6,117.0 138.9,114.3 143.3,116.5 147.2,114.8 151.0,112.1 154.9,113.7 158.2,118.1 162.6,119.8 165.9,122.5 169.7,121.4 171.9,111.0 176.4,107.1 180.8,101.6 184.6,102.7 186.8,105.5 189.2,117.2 193.2,129.9 196.8,141.1 200.3,163.3 204.3,163.7 206.7,168.1 209.5,176.1 213.0,169.7 215.4,177.7 216.5,217.4 217.5,238.1 218.6,214.2 219.7,185.6 221.0,164.9 222.6,147.4 225.4,129.9 228.6,121.2 232.1,126.0 236.9,136.3 240.1,135.5 244.0,131.5 248.0,133.1 252.8,132.3 256.8,135.5 262.3,129.6 266.6,132.2 272.1,143.3 276.3,138.5 280.5,136.4 285.3,128.7 289.5,123.9 293.0,112.0 295.8,108.1 298.6,112.0 300.6,119.0 302.7,116.9 305.5,123.2 309.7,134.3 313.9,145.4 317.3,151.7 320.8,144.7 324.3,139.2 327.8,139.9 331.2,148.2 334.0,167.7 336.1,187.1 337.5,199.7 340.3,178.8 343.1,171.1 346.5,172.5 349.3,177.4 352.8,176.7 357.0,184.4 361.2,180.3 365.3,189.0 369.6,180.3 374.1,184.2 377.3,185.5 379.3,190.0 380.5,213.3 381.6,199.1 383.1,175.8 384.4,157.7 386.4,153.2 388.9,156.4 391.5,143.5 394.1,141.6 396.3,144.2 399.3,135.5 401.9,140.9 404.4,139.0 406.4,143.5 409.6,170.6 411.6,146.1 413.5,144.8 417.4,126.7 420.0,109.9 423.8,109.7 426.4,115.1 430.3,138.3 432.9,137.7 435.5,148.0 439.3,150.6 441.9,122.8 444.9,114.4 448.4,125.4 450.3,138.3 451.9,168.7 454.2,151.3 455.4,145.4 458.4,138.3 460.3,144.3 461.4,160.7 462.5,172.7 464.1,170.0 465.8,183.7 466.6,193.5 467.4,178.2 469.0,165.1 470.7,169.5 471.8,188.0 472.6,195.7 473.4,182.6 474.5,160.7 477.2,129.6 480.0,133.4 483.2,144.3 484.9,166.2 486.2,203.3 487.3,171.6 488.7,162.4 490.3,162.9 492.0,180.4 494.7,189.1 498.0,199.0 499.6,185.9 502.4,170.6 504.6,189.1 506.2,178.2 508.4,178.2 510.6,164.5 512.2,171.6 513.8,170.6 515.5,194.6 517.7,156.3 519.9,172.7 521.5,190.2 523.1,185.3 524.4,205.5 526.5,189.7 528.2,178.2 529.8,170.6 531.5,165.1 532.6,169.5 533.1,193.5 533.9,217.5 535.3,201.2 536.4,171.6 538.0,157.4 540.2,160.7 542.4,174.9 544.6,169.5 547.3,160.7 548.4,166.2 549.0,188.0 549.5,206.6 550.6,188.0 552.2,162.9 554.6,152.0 556.6,169.5 558.8,177.1 560.4,192.4 562.6,182.6 564.3,195.7 565.6,176.0 567.0,161.3 568.6,171.6 569.7,191.3 571.4,211.0 573.0,185.9 574.6,187.0 577.4,208.8 579.6,185.9 581.7,169.5 582.8,160.7 585.9,151.8 588.3,155.3 590.5,169.5 592.4,189.1 594.3,155.8 597.0,144.9 599.2,154.2 601.2,174.9 602.6,160.7 604.3,145.4 606.2,171.6 607.6,149.8 609.2,131.2 611.4,134.5 613.6,132.3 614.7,150.9 616.3,145.4 617.4,156.3 618.5,142.7 620.1,148.7 621.5,142.7 622.6,154.7 624.0,147.6 626.7,148.1 628.3,158.5 631.1,142.7 633.2,158.5 635.4,157.4 637.1,172.7 638.7,178.2 640.3,185.9 642.0,192.4 643.1,188.0 645.3,206.6 646.4,212.6 648.2,219.7 649.6,184.8 651.3,195.7 652.4,211.0 654.6,188.0 656.7,173.8 659.5,162.4 662.2,195.7 663.8,182.6 665.5,169.5 667.6,174.4 668.7,169.5 670.4,157.5 672.0,166.2 673.4,175.0 674.5,170.6 676.4,191.4 677.8,187.0 679.1,172.8 681.3,160.7 683.5,154.7 685.7,160.7 687.3,151.5 689.5,167.3 691.4,170.0 693.3,153.1 695.0,148.7 696.6,148.7 697.7,145.4 698.8,153.1 701.0,154.2 703.2,164.6 706.5,167.3 708.7,162.9 710.3,169.5 712.5,188.1 714.7,184.3 717.4,164.6 720.1,176.6 722.3,167.9 723.4,173.9" fill="none" stroke="#FFFF00" stroke-width="1" shape-rendering="crispEdges"/></svg>
<div style="position:absolute;left:67px;top:193px;width:2px;height:1px;background:#000"></div>
<div style="position:absolute;right:845px;top:188.04px;height:12px;line-height:12px;font-size:12px;font-weight:400;color:#000;letter-spacing:0px;white-space:nowrap;text-align:right;">35.0</div>
<div style="position:absolute;left:67px;top:235px;width:2px;height:1px;background:#000"></div>
<div style="position:absolute;right:845px;top:230.04px;height:12px;line-height:12px;font-size:12px;font-weight:400;color:#000;letter-spacing:0px;white-space:nowrap;text-align:right;">25.0</div>
<div style="position:absolute;left:67px;top:277px;width:2px;height:1px;background:#000"></div>
<div style="position:absolute;right:845px;top:272.04px;height:12px;line-height:12px;font-size:12px;font-weight:400;color:#000;letter-spacing:0px;white-space:nowrap;text-align:right;">15.0</div>
<div style="position:absolute;left:67px;top:319px;width:2px;height:1px;background:#000"></div>
<div style="position:absolute;right:845px;top:314.04px;height:12px;line-height:12px;font-size:12px;font-weight:400;color:#000;letter-spacing:0px;white-space:nowrap;text-align:right;">5.0</div>
<div style="position:absolute;left:67px;top:362px;width:2px;height:1px;background:#000"></div>
<div style="position:absolute;right:845px;top:357.04px;height:12px;line-height:12px;font-size:12px;font-weight:400;color:#000;letter-spacing:0px;white-space:nowrap;text-align:right;">-5.0</div>
<div style="position:absolute;left:67px;top:404px;width:2px;height:1px;background:#000"></div>
<div style="position:absolute;right:845px;top:399.04px;height:12px;line-height:12px;font-size:12px;font-weight:400;color:#000;letter-spacing:0px;white-space:nowrap;text-align:right;">-15.0</div>
<div style="position:absolute;left:67px;top:446px;width:2px;height:1px;background:#000"></div>
<div style="position:absolute;right:845px;top:441.04px;height:12px;line-height:12px;font-size:12px;font-weight:400;color:#000;letter-spacing:0px;white-space:nowrap;text-align:right;">-25.0</div>
<div style="position:absolute;left:67px;top:488px;width:2px;height:1px;background:#000"></div>
<div style="position:absolute;right:845px;top:483.04px;height:12px;line-height:12px;font-size:12px;font-weight:400;color:#000;letter-spacing:0px;white-space:nowrap;text-align:right;">-35.0</div>
<div style="position:absolute;left:69px;top:489px;width:726px;height:16px;background-color:#fff;background-image:linear-gradient(45deg,#E4E2E6 25%,transparent 25%,transparent 75%,#E4E2E6 75%),linear-gradient(45deg,#E4E2E6 25%,transparent 25%,transparent 75%,#E4E2E6 75%);background-size:2px 2px;background-position:0 0,1px 1px"></div>
<div style="position:absolute;left:69px;top:489px;width:18px;height:13px;background:#EBE9ED;border-style:solid;border-width:1px 2px 2px 1px;border-color:#fff #808080 #808080 #fff"></div>
<svg style="position:absolute;left:69px;top:489px" width="21" height="16"><path d="M7 7.5 L11 3.5 V11.5Z" fill="#000"/></svg>
<div style="position:absolute;left:90px;top:489px;width:18px;height:13px;background:#EBE9ED;border-style:solid;border-width:1px 2px 2px 1px;border-color:#fff #808080 #808080 #fff"></div>
<div style="position:absolute;left:774px;top:489px;width:18px;height:13px;background:#EBE9ED;border-style:solid;border-width:1px 2px 2px 1px;border-color:#fff #808080 #808080 #fff"></div>
<svg style="position:absolute;left:774px;top:489px" width="21" height="16"><path d="M13 7.5 L9 3.5 V11.5Z" fill="#000"/></svg>
<div style="position:absolute;left:110px;top:505px;width:1px;height:3px;background:#000"></div>
<div style="position:absolute;left:141px;top:505px;width:1px;height:3px;background:#000"></div>
<div style="position:absolute;left:164px;top:505px;width:1px;height:3px;background:#000"></div>
<div style="position:absolute;left:183px;top:505px;width:1px;height:3px;background:#000"></div>
<div style="position:absolute;left:200px;top:505px;width:1px;height:3px;background:#000"></div>
<div style="position:absolute;left:214px;top:505px;width:1px;height:3px;background:#000"></div>
<div style="position:absolute;left:226px;top:505px;width:1px;height:3px;background:#000"></div>
<div style="position:absolute;left:237px;top:505px;width:1px;height:3px;background:#000"></div>
<div style="position:absolute;left:311px;top:505px;width:1px;height:3px;background:#000"></div>
<div style="position:absolute;left:354px;top:505px;width:1px;height:3px;background:#000"></div>
<div style="position:absolute;left:384px;top:505px;width:1px;height:3px;background:#000"></div>
<div style="position:absolute;left:408px;top:505px;width:1px;height:3px;background:#000"></div>
<div style="position:absolute;left:427px;top:505px;width:1px;height:3px;background:#000"></div>
<div style="position:absolute;left:443px;top:505px;width:1px;height:3px;background:#000"></div>
<div style="position:absolute;left:457px;top:505px;width:1px;height:3px;background:#000"></div>
<div style="position:absolute;left:470px;top:505px;width:1px;height:3px;background:#000"></div>
<div style="position:absolute;left:481px;top:505px;width:1px;height:3px;background:#000"></div>
<div style="position:absolute;left:554px;top:505px;width:1px;height:3px;background:#000"></div>
<div style="position:absolute;left:597px;top:505px;width:1px;height:3px;background:#000"></div>
<div style="position:absolute;left:627px;top:505px;width:1px;height:3px;background:#000"></div>
<div style="position:absolute;left:651px;top:505px;width:1px;height:3px;background:#000"></div>
<div style="position:absolute;left:670px;top:505px;width:1px;height:3px;background:#000"></div>
<div style="position:absolute;left:687px;top:505px;width:1px;height:3px;background:#000"></div>
<div style="position:absolute;left:701px;top:505px;width:1px;height:3px;background:#000"></div>
<div style="position:absolute;left:713px;top:505px;width:1px;height:3px;background:#000"></div>
<div style="position:absolute;left:724px;top:505px;width:1px;height:3px;background:#000"></div>
<div style="position:absolute;left:-89.5px;width:400px;top:509.84px;height:12px;line-height:12px;font-size:12px;font-weight:400;color:#000;letter-spacing:0px;white-space:nowrap;text-align:center;">30</div>
<div style="position:absolute;left:-35.5px;width:400px;top:509.84px;height:12px;line-height:12px;font-size:12px;font-weight:400;color:#000;letter-spacing:0px;white-space:nowrap;text-align:center;">50</div>
<div style="position:absolute;left:0.5px;width:400px;top:509.84px;height:12px;line-height:12px;font-size:12px;font-weight:400;color:#000;letter-spacing:0px;white-space:nowrap;text-align:center;">70</div>
<div style="position:absolute;left:37.5px;width:400px;top:509.84px;height:12px;line-height:12px;font-size:12px;font-weight:400;color:#000;letter-spacing:0px;white-space:nowrap;text-align:center;">100</div>
<div style="position:absolute;left:111.5px;width:400px;top:509.84px;height:12px;line-height:12px;font-size:12px;font-weight:400;color:#000;letter-spacing:0px;white-space:nowrap;text-align:center;">200</div>
<div style="position:absolute;left:154.5px;width:400px;top:509.84px;height:12px;line-height:12px;font-size:12px;font-weight:400;color:#000;letter-spacing:0px;white-space:nowrap;text-align:center;">300</div>
<div style="position:absolute;left:208.5px;width:400px;top:509.84px;height:12px;line-height:12px;font-size:12px;font-weight:400;color:#000;letter-spacing:0px;white-space:nowrap;text-align:center;">500</div>
<div style="position:absolute;left:243.5px;width:400px;top:509.84px;height:12px;line-height:12px;font-size:12px;font-weight:400;color:#000;letter-spacing:0px;white-space:nowrap;text-align:center;">700</div>
<div style="position:absolute;left:281.5px;width:400px;top:509.84px;height:12px;line-height:12px;font-size:12px;font-weight:400;color:#000;letter-spacing:0px;white-space:nowrap;text-align:center;">1.0k</div>
<div style="position:absolute;left:354.5px;width:400px;top:509.84px;height:12px;line-height:12px;font-size:12px;font-weight:400;color:#000;letter-spacing:0px;white-space:nowrap;text-align:center;">2.0k</div>
<div style="position:absolute;left:397.5px;width:400px;top:509.84px;height:12px;line-height:12px;font-size:12px;font-weight:400;color:#000;letter-spacing:0px;white-space:nowrap;text-align:center;">3.0k</div>
<div style="position:absolute;left:451.5px;width:400px;top:509.84px;height:12px;line-height:12px;font-size:12px;font-weight:400;color:#000;letter-spacing:0px;white-space:nowrap;text-align:center;">5.0k</div>
<div style="position:absolute;left:487.5px;width:400px;top:509.84px;height:12px;line-height:12px;font-size:12px;font-weight:400;color:#000;letter-spacing:0px;white-space:nowrap;text-align:center;">7.0k</div>
<div style="position:absolute;left:524.5px;width:400px;top:509.84px;height:12px;line-height:12px;font-size:12px;font-weight:400;color:#000;letter-spacing:0px;white-space:nowrap;text-align:center;">10.0k</div>
<div style="position:absolute;left:254px;width:400px;top:520.84px;height:12px;line-height:12px;font-size:12px;font-weight:400;color:#000;letter-spacing:0px;white-space:nowrap;text-align:center;">Frequency (Hz)</div>
<div style="position:absolute;left:67px;top:627px;width:729px;height:2px;background:#8C8A8E"></div>
<div style="position:absolute;left:67px;top:627px;width:2px;height:317px;background:#8C8A8E"></div>
<div style="position:absolute;left:795px;top:629px;width:1px;height:296px;background:#fff"></div>
<svg style="position:absolute;left:69px;top:629px" width="726" height="296" shape-rendering="crispEdges"><rect x="0" y="0" width="726" height="296" fill="#00FFFF"/><path d="M3.5 0V296M46.5 0V296M76.5 0V296M99.5 0V296M118.5 0V296M134.5 0V296M148.5 0V296M160.5 0V296M171.5 0V296M244.5 0V296M286.5 0V296M316.5 0V296M340.5 0V296M359.5 0V296M375.5 0V296M389.5 0V296M401.5 0V296M412.5 0V296M485.5 0V296M527.5 0V296M557.5 0V296M580.5 0V296M599.5 0V296M615.5 0V296M629.5 0V296M642.5 0V296M653.5 0V296M0 37.5H726M0 74.5H726M0 111.5H726M0 148.5H726M0 185.5H726M0 222.5H726M0 259.5H726M0 296.5H726" stroke="#C0C0C0" stroke-width="1" fill="none"/></svg>
<svg style="position:absolute;left:69px;top:629px" width="726" height="296"><polyline points="0.0,53.3 3.0,53.9 9.9,59.8 17.9,66.8 21.8,72.7 26.8,85.7 32.8,97.6 40.7,105.6 46.7,109.5 54.6,113.5 59.6,123.4 64.6,133.4 70.6,141.3 76.5,148.3 82.5,152.3 86.5,158.2 90.4,167.2 95.2,172.5 98.3,178.8 101.4,191.3 105.6,199.7 110.8,209.1 115.0,212.2 119.2,211.1 124.4,204.9 128.6,195.5 131.7,170.4 136.5,160.4 141.1,171.5 146.3,177.7 152.6,177.7 157.8,189.2 162.0,192.4 168.2,190.3 175.6,181.5 180.8,187.1 184.9,201.8 186.0,210.4 189.9,224.6 193.7,242.1 196.9,248.2 201.3,245.4 204.6,223.5 206.8,222.0 210.0,222.4 215.5,197.3 218.8,209.3 220.5,230.1 221.4,241.0 221.6,150.3 222.5,58.5 223.2,71.6 224.3,106.6 227.5,119.7 230.8,154.7 234.1,165.6 238.0,173.9 244.6,169.5 249.4,173.2 253.3,172.8 256.4,176.1 261.4,169.5 264.6,175.1 269.0,179.0 272.6,178.7 276.2,164.3 279.8,161.7 284.3,155.4 287.8,154.5 293.2,151.5 295.9,156.3 299.5,176.9 302.5,179.6 306.6,190.3 312.0,192.1 315.6,186.7 320.0,169.7 323.6,163.5 327.2,173.3 330.8,185.8 333.5,196.5 336.1,196.5 338.3,176.9 339.7,148.2 341.5,130.4 345.1,133.9 348.7,138.4 353.1,130.7 355.8,133.0 359.4,122.8 360.7,122.1 365.8,133.7 368.9,130.4 371.5,145.4 376.7,189.3 379.3,217.7 381.3,253.9 381.8,151.8 382.6,49.8 383.4,91.1 384.4,137.6 387.0,173.8 389.1,194.5 392.2,190.6 396.1,206.1 398.6,200.9 402.5,212.6 407.2,219.0 410.8,166.0 413.4,163.5 418.5,146.7 426.3,188.0 430.2,189.3 433.0,163.5 434.3,166.0 438.2,146.7 443.1,109.2 447.0,145.4 450.3,185.4 453.3,132.1 457.7,178.2 460.7,233.4 462.6,214.0 465.2,240.1 467.4,185.7 470.4,211.0 474.1,123.9 477.0,171.0 485.0,228.2 486.3,27.1 487.5,71.0 489.0,154.4 491.2,268.4 492.4,73.3 493.5,96.3 495.4,114.2 497.5,234.9 498.4,18.9 499.4,36.8 500.5,74.7 501.7,112.7 502.4,150.0 503.4,205.0 504.6,183.5 507.3,208.0 509.1,195.4 511.3,214.0 512.5,204.3 514.3,245.3 515.4,133.6 517.3,203.6 519.5,250.5 520.3,49.0 521.3,94.9 524.4,248.3 525.5,12.9 527.0,33.0 527.7,68.0 528.5,102.3 529.7,139.0 531.2,247.5 532.3,44.2 533.4,233.4 534.5,56.9 535.7,97.8 536.4,144.0 540.9,215.5 542.4,222.2 543.6,26.3 544.6,85.2 547.6,240.1 549.8,185.7 551.3,179.0 552.8,200.6 555.0,258.7 559.5,290.0 561.5,7.3 562.5,29.3 563.2,65.0 564.4,91.9 565.5,115.0 566.2,152.9 567.7,209.5 569.2,187.2 571.4,146.2 575.2,230.4 576.7,167.8 578.4,245.3 579.6,64.3 580.4,88.9 581.1,120.9 582.6,155.9 588.6,275.1 590.4,287.0 591.5,36.0 592.4,26.3 593.0,65.0 594.5,124.6 596.0,144.0 599.0,200.6 601.2,158.9 603.5,191.7 605.5,137.6 607.4,161.5 608.2,177.4 610.2,191.7 612.5,235.4 613.7,201.2 614.5,229.9 616.4,195.7 617.7,240.2 618.5,196.5 620.4,241.0 623.3,204.4 625.7,235.4 628.4,213.2 629.6,237.8 632.0,256.9 634.4,284.0 635.3,10.9 636.3,249.0 637.6,237.8 638.7,262.5 639.5,1.2 640.5,245.8 641.6,63.9 642.4,277.6 643.5,52.0 644.7,266.5 645.5,87.0 647.1,158.3 648.7,191.7 651.6,200.4 652.7,138.4 655.9,159.1 658.3,213.9 660.5,123.0 661.4,136.3 662.5,146.7 663.2,173.6 664.7,148.2 666.2,157.2 667.3,143.5 668.5,151.2 669.7,169.1 671.4,172.1 673.2,189.3 674.4,167.6 675.5,177.3 676.4,125.1 677.4,123.6 678.6,139.3 681.1,151.2 682.6,161.7 684.1,157.2 686.4,170.6 687.9,172.9 689.4,146.7 691.6,148.2 693.8,157.2 696.1,175.1 699.1,192.3 701.3,188.5 703.5,173.6 705.0,182.6 707.3,199.0 708.5,207.9 709.5,178.1 711.4,207.2 712.5,129.6 714.7,167.6 716.2,176.6 718.5,172.1 720.7,185.6 722.2,209.4 723.7,176.6 724.9,181.8" fill="none" stroke="#000" stroke-width="1" shape-rendering="crispEdges"/></svg>
<div style="position:absolute;left:67px;top:629px;width:2px;height:1px;background:#000"></div>
<div style="position:absolute;right:845px;top:624.04px;height:12px;line-height:12px;font-size:12px;font-weight:400;color:#000;letter-spacing:0px;white-space:nowrap;text-align:right;">180.0</div>
<div style="position:absolute;left:67px;top:666px;width:2px;height:1px;background:#000"></div>
<div style="position:absolute;right:845px;top:661.04px;height:12px;line-height:12px;font-size:12px;font-weight:400;color:#000;letter-spacing:0px;white-space:nowrap;text-align:right;">135.0</div>
<div style="position:absolute;left:67px;top:703px;width:2px;height:1px;background:#000"></div>
<div style="position:absolute;right:845px;top:698.04px;height:12px;line-height:12px;font-size:12px;font-weight:400;color:#000;letter-spacing:0px;white-space:nowrap;text-align:right;">90.0</div>
<div style="position:absolute;left:67px;top:740px;width:2px;height:1px;background:#000"></div>
<div style="position:absolute;right:845px;top:735.04px;height:12px;line-height:12px;font-size:12px;font-weight:400;color:#000;letter-spacing:0px;white-space:nowrap;text-align:right;">45.0</div>
<div style="position:absolute;left:67px;top:777px;width:2px;height:1px;background:#000"></div>
<div style="position:absolute;right:845px;top:772.04px;height:12px;line-height:12px;font-size:12px;font-weight:400;color:#000;letter-spacing:0px;white-space:nowrap;text-align:right;">0.0</div>
<div style="position:absolute;left:67px;top:814px;width:2px;height:1px;background:#000"></div>
<div style="position:absolute;right:845px;top:809.04px;height:12px;line-height:12px;font-size:12px;font-weight:400;color:#000;letter-spacing:0px;white-space:nowrap;text-align:right;">-45.0</div>
<div style="position:absolute;left:67px;top:851px;width:2px;height:1px;background:#000"></div>
<div style="position:absolute;right:845px;top:846.04px;height:12px;line-height:12px;font-size:12px;font-weight:400;color:#000;letter-spacing:0px;white-space:nowrap;text-align:right;">-90.0</div>
<div style="position:absolute;left:67px;top:888px;width:2px;height:1px;background:#000"></div>
<div style="position:absolute;right:845px;top:883.04px;height:12px;line-height:12px;font-size:12px;font-weight:400;color:#000;letter-spacing:0px;white-space:nowrap;text-align:right;">-135.0</div>
<div style="position:absolute;left:67px;top:925px;width:2px;height:1px;background:#000"></div>
<div style="position:absolute;right:845px;top:920.04px;height:12px;line-height:12px;font-size:12px;font-weight:400;color:#000;letter-spacing:0px;white-space:nowrap;text-align:right;">-180.0</div>
<div style="position:absolute;left:69px;top:925px;width:726px;height:16px;background-color:#fff;background-image:linear-gradient(45deg,#E4E2E6 25%,transparent 25%,transparent 75%,#E4E2E6 75%),linear-gradient(45deg,#E4E2E6 25%,transparent 25%,transparent 75%,#E4E2E6 75%);background-size:2px 2px;background-position:0 0,1px 1px"></div>
<div style="position:absolute;left:69px;top:925px;width:18px;height:13px;background:#EBE9ED;border-style:solid;border-width:1px 2px 2px 1px;border-color:#fff #808080 #808080 #fff"></div>
<svg style="position:absolute;left:69px;top:925px" width="21" height="16"><path d="M7 7.5 L11 3.5 V11.5Z" fill="#000"/></svg>
<div style="position:absolute;left:90px;top:925px;width:18px;height:13px;background:#EBE9ED;border-style:solid;border-width:1px 2px 2px 1px;border-color:#fff #808080 #808080 #fff"></div>
<div style="position:absolute;left:774px;top:925px;width:18px;height:13px;background:#EBE9ED;border-style:solid;border-width:1px 2px 2px 1px;border-color:#fff #808080 #808080 #fff"></div>
<svg style="position:absolute;left:774px;top:925px" width="21" height="16"><path d="M13 7.5 L9 3.5 V11.5Z" fill="#000"/></svg>
<div style="position:absolute;left:72px;top:941px;width:1px;height:3px;background:#000"></div>
<div style="position:absolute;left:115px;top:941px;width:1px;height:3px;background:#000"></div>
<div style="position:absolute;left:145px;top:941px;width:1px;height:3px;background:#000"></div>
<div style="position:absolute;left:168px;top:941px;width:1px;height:3px;background:#000"></div>
<div style="position:absolute;left:187px;top:941px;width:1px;height:3px;background:#000"></div>
<div style="position:absolute;left:203px;top:941px;width:1px;height:3px;background:#000"></div>
<div style="position:absolute;left:217px;top:941px;width:1px;height:3px;background:#000"></div>
<div style="position:absolute;left:229px;top:941px;width:1px;height:3px;background:#000"></div>
<div style="position:absolute;left:240px;top:941px;width:1px;height:3px;background:#000"></div>
<div style="position:absolute;left:313px;top:941px;width:1px;height:3px;background:#000"></div>
<div style="position:absolute;left:355px;top:941px;width:1px;height:3px;background:#000"></div>
<div style="position:absolute;left:385px;top:941px;width:1px;height:3px;background:#000"></div>
<div style="position:absolute;left:409px;top:941px;width:1px;height:3px;background:#000"></div>
<div style="position:absolute;left:428px;top:941px;width:1px;height:3px;background:#000"></div>
<div style="position:absolute;left:444px;top:941px;width:1px;height:3px;background:#000"></div>
<div style="position:absolute;left:458px;top:941px;width:1px;height:3px;background:#000"></div>
<div style="position:absolute;left:470px;top:941px;width:1px;height:3px;background:#000"></div>
<div style="position:absolute;left:481px;top:941px;width:1px;height:3px;background:#000"></div>
<div style="position:absolute;left:554px;top:941px;width:1px;height:3px;background:#000"></div>
<div style="position:absolute;left:596px;top:941px;width:1px;height:3px;background:#000"></div>
<div style="position:absolute;left:626px;top:941px;width:1px;height:3px;background:#000"></div>
<div style="position:absolute;left:649px;top:941px;width:1px;height:3px;background:#000"></div>
<div style="position:absolute;left:668px;top:941px;width:1px;height:3px;background:#000"></div>
<div style="position:absolute;left:684px;top:941px;width:1px;height:3px;background:#000"></div>
<div style="position:absolute;left:698px;top:941px;width:1px;height:3px;background:#000"></div>
<div style="position:absolute;left:711px;top:941px;width:1px;height:3px;background:#000"></div>
<div style="position:absolute;left:722px;top:941px;width:1px;height:3px;background:#000"></div>
<div style="position:absolute;left:-127.5px;width:400px;top:945.84px;height:12px;line-height:12px;font-size:12px;font-weight:400;color:#000;letter-spacing:0px;white-space:nowrap;text-align:center;">20</div>
<div style="position:absolute;left:-84.5px;width:400px;top:945.84px;height:12px;line-height:12px;font-size:12px;font-weight:400;color:#000;letter-spacing:0px;white-space:nowrap;text-align:center;">30</div>
<div style="position:absolute;left:-31.5px;width:400px;top:945.84px;height:12px;line-height:12px;font-size:12px;font-weight:400;color:#000;letter-spacing:0px;white-space:nowrap;text-align:center;">50</div>
<div style="position:absolute;left:3.5px;width:400px;top:945.84px;height:12px;line-height:12px;font-size:12px;font-weight:400;color:#000;letter-spacing:0px;white-space:nowrap;text-align:center;">70</div>
<div style="position:absolute;left:40.5px;width:400px;top:945.84px;height:12px;line-height:12px;font-size:12px;font-weight:400;color:#000;letter-spacing:0px;white-space:nowrap;text-align:center;">100</div>
<div style="position:absolute;left:113.5px;width:400px;top:945.84px;height:12px;line-height:12px;font-size:12px;font-weight:400;color:#000;letter-spacing:0px;white-space:nowrap;text-align:center;">200</div>
<div style="position:absolute;left:155.5px;width:400px;top:945.84px;height:12px;line-height:12px;font-size:12px;font-weight:400;color:#000;letter-spacing:0px;white-space:nowrap;text-align:center;">300</div>
<div style="position:absolute;left:209.5px;width:400px;top:945.84px;height:12px;line-height:12px;font-size:12px;font-weight:400;color:#000;letter-spacing:0px;white-space:nowrap;text-align:center;">500</div>
<div style="position:absolute;left:244.5px;width:400px;top:945.84px;height:12px;line-height:12px;font-size:12px;font-weight:400;color:#000;letter-spacing:0px;white-space:nowrap;text-align:center;">700</div>
<div style="position:absolute;left:281.5px;width:400px;top:945.84px;height:12px;line-height:12px;font-size:12px;font-weight:400;color:#000;letter-spacing:0px;white-space:nowrap;text-align:center;">1.0k</div>
<div style="position:absolute;left:354.5px;width:400px;top:945.84px;height:12px;line-height:12px;font-size:12px;font-weight:400;color:#000;letter-spacing:0px;white-space:nowrap;text-align:center;">2.0k</div>
<div style="position:absolute;left:396.5px;width:400px;top:945.84px;height:12px;line-height:12px;font-size:12px;font-weight:400;color:#000;letter-spacing:0px;white-space:nowrap;text-align:center;">3.0k</div>
<div style="position:absolute;left:449.5px;width:400px;top:945.84px;height:12px;line-height:12px;font-size:12px;font-weight:400;color:#000;letter-spacing:0px;white-space:nowrap;text-align:center;">5.0k</div>
<div style="position:absolute;left:484.5px;width:400px;top:945.84px;height:12px;line-height:12px;font-size:12px;font-weight:400;color:#000;letter-spacing:0px;white-space:nowrap;text-align:center;">7.0k</div>
<div style="position:absolute;left:522.5px;width:400px;top:945.84px;height:12px;line-height:12px;font-size:12px;font-weight:400;color:#000;letter-spacing:0px;white-space:nowrap;text-align:center;">10.0k</div>
<div style="position:absolute;left:254px;width:400px;top:956.84px;height:12px;line-height:12px;font-size:12px;font-weight:400;color:#000;letter-spacing:0px;white-space:nowrap;text-align:center;">Frequency (Hz)</div>
<div style="position:absolute;left:69px;top:176.84px;height:12px;line-height:12px;font-size:12px;font-weight:400;color:#000;letter-spacing:0px;white-space:nowrap;">Overall Level = 33.36 dB</div>
<div style="position:absolute;right:113px;top:176.84px;height:12px;line-height:12px;font-size:12px;font-weight:400;color:#000;letter-spacing:0.1px;white-space:nowrap;text-align:right;">Complex Transfer Function (Left/Right)</div>
<div style="position:absolute;left:254px;width:400px;top:612.84px;height:12px;line-height:12px;font-size:12px;font-weight:400;color:#000;letter-spacing:0.1px;white-space:nowrap;text-align:center;">Complex Transfer Function (Left/Right)</div>
<div style="position:absolute;left:22px;top:347px;width:0;height:0;"><div style="position:absolute;left:-100px;top:-7px;width:200px;height:14px;line-height:14px;font-size:12px;text-align:center;transform:rotate(-90deg);white-space:nowrap;color:#000;letter-spacing:0.55px">Relative Amplitude (dB)</div></div>
<div style="position:absolute;left:22px;top:783px;width:0;height:0;"><div style="position:absolute;left:-100px;top:-7px;width:200px;height:14px;line-height:14px;font-size:12px;text-align:center;transform:rotate(-90deg);white-space:nowrap;color:#000;letter-spacing:0.46px">Phase (degrees)</div></div>
<svg style="position:absolute;left:750px;top:195px" width="43" height="24" shape-rendering="crispEdges"><rect x="0" y="0" width="43" height="1" fill="#000"/><rect x="0" y="1" width="43" height="1" fill="#000"/><rect x="0" y="2" width="43" height="1" fill="#000"/><rect x="0" y="3" width="5" height="1" fill="#000"/><rect x="5" y="3" width="8" height="1" fill="#fff"/><rect x="13" y="3" width="9" height="1" fill="#000"/><rect x="22" y="3" width="2" height="1" fill="#fff"/><rect x="24" y="3" width="19" height="1" fill="#000"/><rect x="0" y="4" width="4" height="1" fill="#000"/><rect x="4" y="4" width="10" height="1" fill="#fff"/><rect x="14" y="4" width="7" height="1" fill="#000"/><rect x="21" y="4" width="1" height="1" fill="#fff"/><rect x="22" y="4" width="2" height="1" fill="#000"/><rect x="24" y="4" width="1" height="1" fill="#fff"/><rect x="25" y="4" width="18" height="1" fill="#000"/><rect x="0" y="5" width="4" height="1" fill="#000"/><rect x="4" y="5" width="2" height="1" fill="#fff"/><rect x="6" y="5" width="5" height="1" fill="#000"/><rect x="11" y="5" width="3" height="1" fill="#fff"/><rect x="14" y="5" width="6" height="1" fill="#000"/><rect x="20" y="5" width="1" height="1" fill="#fff"/><rect x="21" y="5" width="4" height="1" fill="#000"/><rect x="25" y="5" width="1" height="1" fill="#fff"/><rect x="26" y="5" width="17" height="1" fill="#000"/><rect x="0" y="6" width="4" height="1" fill="#000"/><rect x="4" y="6" width="8" height="1" fill="#fff"/><rect x="12" y="6" width="8" height="1" fill="#000"/><rect x="20" y="6" width="1" height="1" fill="#fff"/><rect x="21" y="6" width="4" height="1" fill="#000"/><rect x="25" y="6" width="1" height="1" fill="#fff"/><rect x="26" y="6" width="17" height="1" fill="#000"/><rect x="0" y="7" width="4" height="1" fill="#000"/><rect x="4" y="7" width="10" height="1" fill="#fff"/><rect x="14" y="7" width="5" height="1" fill="#000"/><rect x="19" y="7" width="1" height="1" fill="#fff"/><rect x="20" y="7" width="6" height="1" fill="#000"/><rect x="26" y="7" width="1" height="1" fill="#fff"/><rect x="27" y="7" width="16" height="1" fill="#000"/><rect x="0" y="8" width="6" height="1" fill="#000"/><rect x="6" y="8" width="8" height="1" fill="#fff"/><rect x="14" y="8" width="5" height="1" fill="#000"/><rect x="19" y="8" width="1" height="1" fill="#fff"/><rect x="20" y="8" width="6" height="1" fill="#000"/><rect x="26" y="8" width="1" height="1" fill="#fff"/><rect x="27" y="8" width="16" height="1" fill="#000"/><rect x="0" y="9" width="3" height="1" fill="#000"/><rect x="3" y="9" width="3" height="1" fill="#fff"/><rect x="6" y="9" width="5" height="1" fill="#000"/><rect x="11" y="9" width="3" height="1" fill="#fff"/><rect x="14" y="9" width="4" height="1" fill="#000"/><rect x="18" y="9" width="1" height="1" fill="#fff"/><rect x="19" y="9" width="8" height="1" fill="#000"/><rect x="27" y="9" width="1" height="1" fill="#fff"/><rect x="28" y="9" width="15" height="1" fill="#000"/><rect x="0" y="10" width="4" height="1" fill="#000"/><rect x="4" y="10" width="10" height="1" fill="#fff"/><rect x="14" y="10" width="4" height="1" fill="#000"/><rect x="18" y="10" width="1" height="1" fill="#fff"/><rect x="19" y="10" width="8" height="1" fill="#000"/><rect x="27" y="10" width="1" height="1" fill="#fff"/><rect x="28" y="10" width="15" height="1" fill="#000"/><rect x="0" y="11" width="4" height="1" fill="#000"/><rect x="4" y="11" width="9" height="1" fill="#fff"/><rect x="13" y="11" width="4" height="1" fill="#000"/><rect x="17" y="11" width="1" height="1" fill="#fff"/><rect x="18" y="11" width="10" height="1" fill="#000"/><rect x="28" y="11" width="1" height="1" fill="#fff"/><rect x="29" y="11" width="14" height="1" fill="#000"/><rect x="0" y="12" width="17" height="1" fill="#000"/><rect x="17" y="12" width="23" height="1" fill="#fff"/><rect x="40" y="12" width="3" height="1" fill="#000"/><rect x="0" y="13" width="4" height="1" fill="#000"/><rect x="4" y="13" width="10" height="1" fill="#fff"/><rect x="14" y="13" width="14" height="1" fill="#000"/><rect x="28" y="13" width="1" height="1" fill="#fff"/><rect x="29" y="13" width="10" height="1" fill="#000"/><rect x="39" y="13" width="1" height="1" fill="#fff"/><rect x="40" y="13" width="3" height="1" fill="#000"/><rect x="0" y="14" width="4" height="1" fill="#000"/><rect x="4" y="14" width="10" height="1" fill="#fff"/><rect x="14" y="14" width="15" height="1" fill="#000"/><rect x="29" y="14" width="1" height="1" fill="#fff"/><rect x="30" y="14" width="8" height="1" fill="#000"/><rect x="38" y="14" width="1" height="1" fill="#fff"/><rect x="39" y="14" width="4" height="1" fill="#000"/><rect x="0" y="15" width="4" height="1" fill="#000"/><rect x="4" y="15" width="10" height="1" fill="#fff"/><rect x="14" y="15" width="15" height="1" fill="#000"/><rect x="29" y="15" width="1" height="1" fill="#fff"/><rect x="30" y="15" width="8" height="1" fill="#000"/><rect x="38" y="15" width="1" height="1" fill="#fff"/><rect x="39" y="15" width="4" height="1" fill="#000"/><rect x="0" y="16" width="7" height="1" fill="#000"/><rect x="7" y="16" width="3" height="1" fill="#fff"/><rect x="10" y="16" width="20" height="1" fill="#000"/><rect x="30" y="16" width="1" height="1" fill="#fff"/><rect x="31" y="16" width="6" height="1" fill="#000"/><rect x="37" y="16" width="1" height="1" fill="#fff"/><rect x="38" y="16" width="5" height="1" fill="#000"/><rect x="0" y="17" width="7" height="1" fill="#000"/><rect x="7" y="17" width="3" height="1" fill="#fff"/><rect x="10" y="17" width="20" height="1" fill="#000"/><rect x="30" y="17" width="1" height="1" fill="#fff"/><rect x="31" y="17" width="6" height="1" fill="#000"/><rect x="37" y="17" width="1" height="1" fill="#fff"/><rect x="38" y="17" width="5" height="1" fill="#000"/><rect x="0" y="18" width="7" height="1" fill="#000"/><rect x="7" y="18" width="3" height="1" fill="#fff"/><rect x="10" y="18" width="21" height="1" fill="#000"/><rect x="31" y="18" width="1" height="1" fill="#fff"/><rect x="32" y="18" width="4" height="1" fill="#000"/><rect x="36" y="18" width="1" height="1" fill="#fff"/><rect x="37" y="18" width="6" height="1" fill="#000"/><rect x="0" y="19" width="7" height="1" fill="#000"/><rect x="7" y="19" width="3" height="1" fill="#fff"/><rect x="10" y="19" width="22" height="1" fill="#000"/><rect x="32" y="19" width="1" height="1" fill="#fff"/><rect x="33" y="19" width="2" height="1" fill="#000"/><rect x="35" y="19" width="1" height="1" fill="#fff"/><rect x="36" y="19" width="7" height="1" fill="#000"/><rect x="0" y="20" width="7" height="1" fill="#000"/><rect x="7" y="20" width="3" height="1" fill="#fff"/><rect x="10" y="20" width="22" height="1" fill="#000"/><rect x="32" y="20" width="3" height="1" fill="#fff"/><rect x="35" y="20" width="8" height="1" fill="#000"/><rect x="0" y="21" width="43" height="1" fill="#000"/><rect x="0" y="22" width="43" height="1" fill="#000"/><rect x="0" y="23" width="43" height="1" fill="#000"/></svg>
<svg style="position:absolute;left:750px;top:631px" width="43" height="24" shape-rendering="crispEdges"><rect x="0" y="0" width="43" height="1" fill="#000"/><rect x="0" y="1" width="43" height="1" fill="#000"/><rect x="0" y="2" width="43" height="1" fill="#000"/><rect x="0" y="3" width="5" height="1" fill="#000"/><rect x="5" y="3" width="8" height="1" fill="#fff"/><rect x="13" y="3" width="9" height="1" fill="#000"/><rect x="22" y="3" width="2" height="1" fill="#fff"/><rect x="24" y="3" width="19" height="1" fill="#000"/><rect x="0" y="4" width="4" height="1" fill="#000"/><rect x="4" y="4" width="10" height="1" fill="#fff"/><rect x="14" y="4" width="7" height="1" fill="#000"/><rect x="21" y="4" width="1" height="1" fill="#fff"/><rect x="22" y="4" width="2" height="1" fill="#000"/><rect x="24" y="4" width="1" height="1" fill="#fff"/><rect x="25" y="4" width="18" height="1" fill="#000"/><rect x="0" y="5" width="4" height="1" fill="#000"/><rect x="4" y="5" width="2" height="1" fill="#fff"/><rect x="6" y="5" width="5" height="1" fill="#000"/><rect x="11" y="5" width="3" height="1" fill="#fff"/><rect x="14" y="5" width="6" height="1" fill="#000"/><rect x="20" y="5" width="1" height="1" fill="#fff"/><rect x="21" y="5" width="4" height="1" fill="#000"/><rect x="25" y="5" width="1" height="1" fill="#fff"/><rect x="26" y="5" width="17" height="1" fill="#000"/><rect x="0" y="6" width="4" height="1" fill="#000"/><rect x="4" y="6" width="8" height="1" fill="#fff"/><rect x="12" y="6" width="8" height="1" fill="#000"/><rect x="20" y="6" width="1" height="1" fill="#fff"/><rect x="21" y="6" width="4" height="1" fill="#000"/><rect x="25" y="6" width="1" height="1" fill="#fff"/><rect x="26" y="6" width="17" height="1" fill="#000"/><rect x="0" y="7" width="4" height="1" fill="#000"/><rect x="4" y="7" width="10" height="1" fill="#fff"/><rect x="14" y="7" width="5" height="1" fill="#000"/><rect x="19" y="7" width="1" height="1" fill="#fff"/><rect x="20" y="7" width="6" height="1" fill="#000"/><rect x="26" y="7" width="1" height="1" fill="#fff"/><rect x="27" y="7" width="16" height="1" fill="#000"/><rect x="0" y="8" width="6" height="1" fill="#000"/><rect x="6" y="8" width="8" height="1" fill="#fff"/><rect x="14" y="8" width="5" height="1" fill="#000"/><rect x="19" y="8" width="1" height="1" fill="#fff"/><rect x="20" y="8" width="6" height="1" fill="#000"/><rect x="26" y="8" width="1" height="1" fill="#fff"/><rect x="27" y="8" width="16" height="1" fill="#000"/><rect x="0" y="9" width="3" height="1" fill="#000"/><rect x="3" y="9" width="3" height="1" fill="#fff"/><rect x="6" y="9" width="5" height="1" fill="#000"/><rect x="11" y="9" width="3" height="1" fill="#fff"/><rect x="14" y="9" width="4" height="1" fill="#000"/><rect x="18" y="9" width="1" height="1" fill="#fff"/><rect x="19" y="9" width="8" height="1" fill="#000"/><rect x="27" y="9" width="1" height="1" fill="#fff"/><rect x="28" y="9" width="15" height="1" fill="#000"/><rect x="0" y="10" width="4" height="1" fill="#000"/><rect x="4" y="10" width="10" height="1" fill="#fff"/><rect x="14" y="10" width="4" height="1" fill="#000"/><rect x="18" y="10" width="1" height="1" fill="#fff"/><rect x="19" y="10" width="8" height="1" fill="#000"/><rect x="27" y="10" width="1" height="1" fill="#fff"/><rect x="28" y="10" width="15" height="1" fill="#000"/><rect x="0" y="11" width="4" height="1" fill="#000"/><rect x="4" y="11" width="9" height="1" fill="#fff"/><rect x="13" y="11" width="4" height="1" fill="#000"/><rect x="17" y="11" width="1" height="1" fill="#fff"/><rect x="18" y="11" width="10" height="1" fill="#000"/><rect x="28" y="11" width="1" height="1" fill="#fff"/><rect x="29" y="11" width="14" height="1" fill="#000"/><rect x="0" y="12" width="17" height="1" fill="#000"/><rect x="17" y="12" width="23" height="1" fill="#fff"/><rect x="40" y="12" width="3" height="1" fill="#000"/><rect x="0" y="13" width="4" height="1" fill="#000"/><rect x="4" y="13" width="10" height="1" fill="#fff"/><rect x="14" y="13" width="14" height="1" fill="#000"/><rect x="28" y="13" width="1" height="1" fill="#fff"/><rect x="29" y="13" width="10" height="1" fill="#000"/><rect x="39" y="13" width="1" height="1" fill="#fff"/><rect x="40" y="13" width="3" height="1" fill="#000"/><rect x="0" y="14" width="4" height="1" fill="#000"/><rect x="4" y="14" width="10" height="1" fill="#fff"/><rect x="14" y="14" width="15" height="1" fill="#000"/><rect x="29" y="14" width="1" height="1" fill="#fff"/><rect x="30" y="14" width="8" height="1" fill="#000"/><rect x="38" y="14" width="1" height="1" fill="#fff"/><rect x="39" y="14" width="4" height="1" fill="#000"/><rect x="0" y="15" width="4" height="1" fill="#000"/><rect x="4" y="15" width="10" height="1" fill="#fff"/><rect x="14" y="15" width="15" height="1" fill="#000"/><rect x="29" y="15" width="1" height="1" fill="#fff"/><rect x="30" y="15" width="8" height="1" fill="#000"/><rect x="38" y="15" width="1" height="1" fill="#fff"/><rect x="39" y="15" width="4" height="1" fill="#000"/><rect x="0" y="16" width="7" height="1" fill="#000"/><rect x="7" y="16" width="3" height="1" fill="#fff"/><rect x="10" y="16" width="20" height="1" fill="#000"/><rect x="30" y="16" width="1" height="1" fill="#fff"/><rect x="31" y="16" width="6" height="1" fill="#000"/><rect x="37" y="16" width="1" height="1" fill="#fff"/><rect x="38" y="16" width="5" height="1" fill="#000"/><rect x="0" y="17" width="7" height="1" fill="#000"/><rect x="7" y="17" width="3" height="1" fill="#fff"/><rect x="10" y="17" width="20" height="1" fill="#000"/><rect x="30" y="17" width="1" height="1" fill="#fff"/><rect x="31" y="17" width="6" height="1" fill="#000"/><rect x="37" y="17" width="1" height="1" fill="#fff"/><rect x="38" y="17" width="5" height="1" fill="#000"/><rect x="0" y="18" width="7" height="1" fill="#000"/><rect x="7" y="18" width="3" height="1" fill="#fff"/><rect x="10" y="18" width="21" height="1" fill="#000"/><rect x="31" y="18" width="1" height="1" fill="#fff"/><rect x="32" y="18" width="4" height="1" fill="#000"/><rect x="36" y="18" width="1" height="1" fill="#fff"/><rect x="37" y="18" width="6" height="1" fill="#000"/><rect x="0" y="19" width="7" height="1" fill="#000"/><rect x="7" y="19" width="3" height="1" fill="#fff"/><rect x="10" y="19" width="22" height="1" fill="#000"/><rect x="32" y="19" width="1" height="1" fill="#fff"/><rect x="33" y="19" width="2" height="1" fill="#000"/><rect x="35" y="19" width="1" height="1" fill="#fff"/><rect x="36" y="19" width="7" height="1" fill="#000"/><rect x="0" y="20" width="7" height="1" fill="#000"/><rect x="7" y="20" width="3" height="1" fill="#fff"/><rect x="10" y="20" width="22" height="1" fill="#000"/><rect x="32" y="20" width="3" height="1" fill="#fff"/><rect x="35" y="20" width="8" height="1" fill="#000"/><rect x="0" y="21" width="43" height="1" fill="#000"/><rect x="0" y="22" width="43" height="1" fill="#000"/><rect x="0" y="23" width="43" height="1" fill="#000"/></svg>
<div style="position:absolute;left:823px;top:179.84px;height:12px;line-height:12px;font-size:12px;font-weight:400;color:#000;letter-spacing:0.1px;white-space:nowrap;"><u>Overlays</u></div>
<div style="position:absolute;left:810px;top:202px;width:0;height:0;"><div style="position:absolute;left:-20px;top:-7px;width:40px;height:14px;line-height:14px;font-size:12px;text-align:center;transform:rotate(-90deg);white-space:nowrap;color:#000">Set</div></div>
<div style="position:absolute;left:824px;top:203px;width:0;height:0;"><div style="position:absolute;left:-20px;top:-7px;width:40px;height:14px;line-height:14px;font-size:12px;text-align:center;transform:rotate(-90deg);white-space:nowrap;color:#000">On</div></div>
<div style="position:absolute;left:802px;top:214px;width:11px;height:11px;background:#EBE9ED;border-style:solid;border-width:1px 2px 2px 1px;border-color:#fff #808080 #808080 #fff"></div>
<div style="position:absolute;left:609px;width:400px;top:214.84px;height:12px;line-height:12px;font-size:12px;font-weight:400;color:#000;letter-spacing:0px;white-space:nowrap;text-align:center;">1</div>
<div style="position:absolute;left:819px;top:214px;width:10px;height:10px;background:#fff;border-style:solid;border-width:2px;border-color:#8E8E8E #F8F8F8 #F8F8F8 #8E8E8E;box-shadow:inset 1px 1px 0 #6E6E6E"></div>
<div style="position:absolute;left:835.5px;top:215.84px;height:12px;line-height:12px;font-size:12px;font-weight:400;color:#FF0000;letter-spacing:-0.15px;white-space:nowrap;">Overlay 1</div>
<div style="position:absolute;left:802px;top:230px;width:11px;height:11px;background:#EBE9ED;border-style:solid;border-width:1px 2px 2px 1px;border-color:#fff #808080 #808080 #fff"></div>
<div style="position:absolute;left:609px;width:400px;top:230.84px;height:12px;line-height:12px;font-size:12px;font-weight:400;color:#000;letter-spacing:0px;white-space:nowrap;text-align:center;">2</div>
<div style="position:absolute;left:819px;top:230px;width:10px;height:10px;background:#fff;border-style:solid;border-width:2px;border-color:#8E8E8E #F8F8F8 #F8F8F8 #8E8E8E;box-shadow:inset 1px 1px 0 #6E6E6E"></div>
<div style="position:absolute;left:835.5px;top:231.84px;height:12px;line-height:12px;font-size:12px;font-weight:400;color:#FF00FF;letter-spacing:-0.15px;white-space:nowrap;">Overlay 2</div>
<div style="position:absolute;left:802px;top:246px;width:11px;height:11px;background:#EBE9ED;border-style:solid;border-width:1px 2px 2px 1px;border-color:#fff #808080 #808080 #fff"></div>
<div style="position:absolute;left:609px;width:400px;top:246.84px;height:12px;line-height:12px;font-size:12px;font-weight:400;color:#000;letter-spacing:0px;white-space:nowrap;text-align:center;">3</div>
<div style="position:absolute;left:819px;top:246px;width:10px;height:10px;background:#fff;border-style:solid;border-width:2px;border-color:#8E8E8E #F8F8F8 #F8F8F8 #8E8E8E;box-shadow:inset 1px 1px 0 #6E6E6E"></div>
<div style="position:absolute;left:835.5px;top:247.84px;height:12px;line-height:12px;font-size:12px;font-weight:400;color:#0000FF;letter-spacing:-0.15px;white-space:nowrap;">Overlay 3</div>
<div style="position:absolute;left:802px;top:262px;width:11px;height:11px;background:#EBE9ED;border-style:solid;border-width:1px 2px 2px 1px;border-color:#fff #808080 #808080 #fff"></div>
<div style="position:absolute;left:609px;width:400px;top:262.84px;height:12px;line-height:12px;font-size:12px;font-weight:400;color:#000;letter-spacing:0px;white-space:nowrap;text-align:center;">4</div>
<div style="position:absolute;left:819px;top:262px;width:10px;height:10px;background:#fff;border-style:solid;border-width:2px;border-color:#8E8E8E #F8F8F8 #F8F8F8 #8E8E8E;box-shadow:inset 1px 1px 0 #6E6E6E"></div>
<div style="position:absolute;left:835.5px;top:263.84px;height:12px;line-height:12px;font-size:12px;font-weight:400;color:#00FFFF;letter-spacing:-0.15px;white-space:nowrap;">Overlay 4</div>
<div style="position:absolute;left:800px;top:280px;width:60px;height:14px;background:#EBE9ED;border-style:solid;border-width:1px 2px 2px 1px;border-color:#fff #808080 #808080 #fff"></div>
<div style="position:absolute;left:631.5px;width:400px;top:282.84px;height:12px;line-height:12px;font-size:12px;font-weight:400;color:#000;letter-spacing:0.1px;white-space:nowrap;text-align:center;">Options...</div>
<div style="position:absolute;left:4px;top:975px;width:900px;height:1px;background:#808080"></div>
<div style="position:absolute;left:4px;top:976px;width:900px;height:1px;background:#000"></div>
<div style="position:absolute;left:4px;top:977px;width:900px;height:24px;background:#EBE9ED"></div>
<div style="position:absolute;left:5px;top:977px;width:898px;height:1px;background:#fff"></div>
<div style="position:absolute;left:5px;top:977px;width:1px;height:23px;background:#fff"></div>
<div style="position:absolute;left:5px;top:999px;width:898px;height:1px;background:#fff"></div>
<div style="position:absolute;left:902px;top:977px;width:1px;height:23px;background:#fff"></div>
<div style="position:absolute;left:903px;top:975px;width:1px;height:27px;background:#000"></div>
<div style="position:absolute;left:4px;top:1000px;width:900px;height:2px;background:#000"></div>
<div style="position:absolute;left:8px;top:980px;width:117px;height:16px;border-style:solid;border-width:1px;border-color:#8A8A8A #F8F8F8 #F8F8F8 #8A8A8A"></div>
<div style="position:absolute;left:12px;top:982.84px;height:12px;line-height:12px;font-size:12px;font-weight:400;color:#000;letter-spacing:0px;white-space:nowrap;">Stopped</div>
<div style="position:absolute;left:128px;top:980px;width:100px;height:16px;border-style:solid;border-width:1px;border-color:#8A8A8A #F8F8F8 #F8F8F8 #8A8A8A"></div>
<div style="position:absolute;left:132px;top:982.84px;height:12px;line-height:12px;font-size:12px;font-weight:400;color:#000;letter-spacing:0px;white-space:nowrap;">Real Time</div>
<div style="position:absolute;left:231px;top:980px;width:69px;height:16px;border-style:solid;border-width:1px;border-color:#8A8A8A #F8F8F8 #F8F8F8 #8A8A8A"></div>
<div style="position:absolute;left:235px;top:982.84px;height:12px;line-height:12px;font-size:12px;font-weight:400;color:#000;letter-spacing:0px;white-space:nowrap;">96000 Hz</div>
<div style="position:absolute;left:304px;top:980px;width:49px;height:16px;border-style:solid;border-width:1px;border-color:#8A8A8A #F8F8F8 #F8F8F8 #8A8A8A"></div>
<div style="position:absolute;left:308px;top:982.84px;height:12px;line-height:12px;font-size:12px;font-weight:400;color:#000;letter-spacing:0px;white-space:nowrap;">16 Bit</div>
<div style="position:absolute;left:357px;top:980px;width:59px;height:16px;border-style:solid;border-width:1px;border-color:#8A8A8A #F8F8F8 #F8F8F8 #8A8A8A"></div>
<div style="position:absolute;left:361px;top:982.84px;height:12px;line-height:12px;font-size:12px;font-weight:400;color:#000;letter-spacing:0px;white-space:nowrap;">Stereo</div>
<div style="position:absolute;left:420px;top:980px;width:99px;height:16px;border-style:solid;border-width:1px;border-color:#8A8A8A #F8F8F8 #F8F8F8 #8A8A8A"></div>
<div style="position:absolute;left:424px;top:982.84px;height:12px;line-height:12px;font-size:12px;font-weight:400;color:#000;letter-spacing:0px;white-space:nowrap;">FFT 65536 pts</div>
<div style="position:absolute;left:523px;top:980px;width:72px;height:16px;border-style:solid;border-width:1px;border-color:#8A8A8A #F8F8F8 #F8F8F8 #8A8A8A"></div>
<div style="position:absolute;left:527px;top:982.84px;height:12px;line-height:12px;font-size:12px;font-weight:400;color:#000;letter-spacing:0px;white-space:nowrap;">Flat top</div>
<div style="position:absolute;left:0px;top:1002px;width:908px;height:4px;background:#4F86D8"></div>
<svg style="position:absolute;left:0;top:1002px" width="120" height="4"><path d="M0 0 H102 L106 4 H0Z" fill="#4A5468"/></svg>
</body></html>
